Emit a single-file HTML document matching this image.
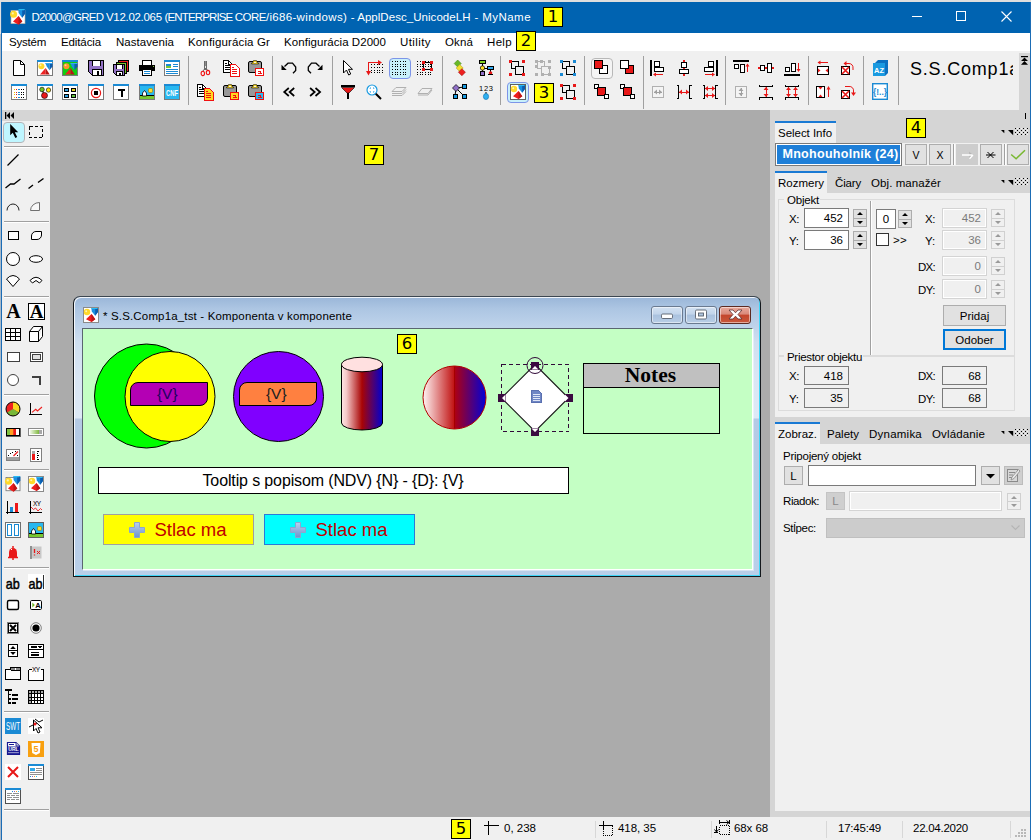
<!DOCTYPE html>
<html lang="sk"><head><meta charset="utf-8"><title>D2000 GRED</title>
<style>
html,body{margin:0;padding:0;}
body{width:1031px;height:840px;position:relative;overflow:hidden;background:#f0f0f0;font-family:"Liberation Sans",Arial,sans-serif;}
.a{position:absolute;box-sizing:border-box;}
.t{position:absolute;white-space:pre;color:#000;}
svg{overflow:visible;}
</style></head>
<body>
<div class="a" style="left:0px;top:0px;width:1031px;height:2px;background:#dedede;"></div>
<div class="a" style="left:0px;top:2px;width:1031px;height:31px;background:#0063b1;"></div>
<div class="a" style="left:0px;top:33px;width:1031px;height:18px;background:#ffffff;"></div>
<div class="a" style="left:0px;top:51px;width:1031px;height:59px;background:#f0f0f0;"></div>
<div class="a" style="left:0px;top:0px;width:1px;height:34px;background:#e2e2e2;"></div>
<div class="a" style="left:0px;top:34px;width:1px;height:806px;background:#a9b9c9;"></div>
<div class="a" style="left:1px;top:2px;width:1px;height:838px;background:#1b6cb5;"></div>
<div class="a" style="left:1030px;top:2px;width:1px;height:838px;background:#1b6cb5;"></div>
<span class="t" style="left:31.50px;top:8.50px;font-size:11.5px;line-height:16px;letter-spacing:-0.680px;color:#fff;">D2000@GRED </span>
<span class="t" style="left:106.00px;top:8.50px;font-size:11.5px;line-height:16px;letter-spacing:-0.311px;color:#fff;">V12.02.065 </span>
<span class="t" style="left:164.60px;top:8.50px;font-size:11.5px;line-height:16px;letter-spacing:-0.868px;color:#fff;">(ENTERPRISE </span>
<span class="t" style="left:234.70px;top:8.50px;font-size:11.5px;line-height:16px;letter-spacing:-0.506px;color:#fff;">CORE</span>
<span class="t" style="left:265.90px;top:8.50px;font-size:11.5px;line-height:16px;letter-spacing:0.327px;color:#fff;">/i686-windows) </span>
<span class="t" style="left:350.70px;top:8.50px;font-size:11.5px;line-height:16px;letter-spacing:0.046px;color:#fff;">- ApplDesc_UnicodeLH </span>
<span class="t" style="left:474.40px;top:8.50px;font-size:11.5px;line-height:16px;letter-spacing:0.446px;color:#fff;">- MyName</span>
<div class="a" style="left:543px;top:7px;width:20px;height:20px;background:#ffff00;border:1px solid #000;"></div>
<span class="t" style="left:547.75px;top:7.00px;font-size:16.5px;line-height:20px;font-family:'DejaVu Sans', sans-serif;">1</span>
<svg class="a" style="left:912px;top:16px;" width="11" height="1" viewBox="0 0 11 1"><rect width="10" height="1" fill="#fff"/></svg>
<svg class="a" style="left:956px;top:11px;" width="11" height="11" viewBox="0 0 11 11"><rect x="0.5" y="0.5" width="9" height="9" fill="none" stroke="#fff"/></svg>
<svg class="a" style="left:1001px;top:11px;" width="11" height="11" viewBox="0 0 11 11"><path d="M0.5 0.5 L10.5 10.5 M10.5 0.5 L0.5 10.5" stroke="#fff" stroke-width="1.1" fill="none"/></svg>
<span class="t" style="left:9.00px;top:34.00px;font-size:11.5px;line-height:16px;letter-spacing:-0.223px;">Systém</span>
<span class="t" style="left:61.00px;top:34.00px;font-size:11.5px;line-height:16px;letter-spacing:-0.114px;">Editácia</span>
<span class="t" style="left:116.00px;top:34.00px;font-size:11.5px;line-height:16px;letter-spacing:0.047px;">Nastavenia</span>
<span class="t" style="left:188.00px;top:34.00px;font-size:11.5px;line-height:16px;letter-spacing:0.140px;">Konfigurácia Gr</span>
<span class="t" style="left:284.00px;top:34.00px;font-size:11.5px;line-height:16px;letter-spacing:0.055px;">Konfigurácia D2000</span>
<span class="t" style="left:400.00px;top:34.00px;font-size:11.5px;line-height:16px;letter-spacing:0.413px;">Utility</span>
<span class="t" style="left:445.00px;top:34.00px;font-size:11.5px;line-height:16px;letter-spacing:0.128px;">Okná</span>
<span class="t" style="left:487.00px;top:34.00px;font-size:11.5px;line-height:16px;letter-spacing:0.337px;">Help</span>
<div class="a" style="left:516px;top:31px;width:20px;height:20px;background:#ffff00;border:1px solid #000;"></div>
<span class="t" style="left:520.75px;top:31.00px;font-size:16.5px;line-height:20px;font-family:'DejaVu Sans', sans-serif;">2</span>
<div class="a" style="left:50px;top:110px;width:720px;height:707px;background:#ababab;"></div>
<div class="a" style="left:2px;top:110px;width:48px;height:707px;background:#f0f0f0;"></div>
<div class="a" style="left:770px;top:110px;width:260px;height:707px;background:#d5d5d5;"></div>
<div class="a" style="left:1019px;top:53px;width:11px;height:57px;background:#d5d5d5;"></div>
<div class="a" style="left:2px;top:817px;width:1028px;height:23px;background:#f0f0f0;"></div>
<div class="a" style="left:364px;top:145px;width:20px;height:20px;background:#ffff00;border:1px solid #000;"></div>
<span class="t" style="left:368.75px;top:145.00px;font-size:16.5px;line-height:20px;font-family:'DejaVu Sans', sans-serif;">7</span>
<div class="a" style="left:188px;top:56px;width:1px;height:49px;background:#a0a0a0;"></div>
<div class="a" style="left:272px;top:56px;width:1px;height:49px;background:#a0a0a0;"></div>
<div class="a" style="left:332px;top:56px;width:1px;height:49px;background:#a0a0a0;"></div>
<div class="a" style="left:442px;top:56px;width:1px;height:49px;background:#a0a0a0;"></div>
<div class="a" style="left:500px;top:56px;width:1px;height:49px;background:#a0a0a0;"></div>
<div class="a" style="left:584px;top:56px;width:1px;height:49px;background:#a0a0a0;"></div>
<div class="a" style="left:643px;top:56px;width:1px;height:53px;background:#a0a0a0;"></div>
<div class="a" style="left:725px;top:56px;width:1px;height:49px;background:#a0a0a0;"></div>
<div class="a" style="left:808px;top:56px;width:1px;height:49px;background:#a0a0a0;"></div>
<div class="a" style="left:863px;top:56px;width:1px;height:49px;background:#a0a0a0;"></div>
<div class="a" style="left:898px;top:56px;width:1px;height:49px;background:#a0a0a0;"></div>
<svg class="a" style="left:11px;top:60px;" width="16" height="16" viewBox="0 0 16 16"><path d="M2.5 0.5 H9.5 L13.5 4.5 V15.5 H2.5 Z" fill="#fff" stroke="#000"/><path d="M9.5 0.5 V4.5 H13.5" fill="none" stroke="#000"/></svg>
<svg class="a" style="left:37px;top:60px;shape-rendering:crispEdges;" width="16" height="16" viewBox="0 0 16 16"><rect x="0.5" y="1.5" width="15" height="14" fill="#fff" stroke="#7a7a7a"/><rect x="0" y="0" width="16" height="2" fill="#1a8ad4"/><g shape-rendering="auto"><circle cx="4.400" cy="6.300" r="3" fill="#ffd92a"/><circle cx="3.500" cy="5.300" r="1" fill="#fff4b0"/><path d="M8.300 3 H12.500 V10.200 L9.800 6.500 Z" fill="#1a90e0"/><path d="M12.500 3 H15.500 V6.500 L12.500 10.200 Z" fill="#0b5cae"/><path d="M8.300 3 H15.500 V4 H8.800Z" fill="#38a8ec"/><path d="M8.600 8 L3 14.600 H8.600 Z" fill="#ee2222"/><path d="M8.600 8 L12.700 14.600 H8.600 Z" fill="#b81414"/></g></svg>
<svg class="a" style="left:62px;top:60px;shape-rendering:crispEdges;" width="16" height="16" viewBox="0 0 16 16"><rect x="0.5" y="1.5" width="15" height="14" fill="#10d010" stroke="#7a7a7a"/><rect x="0" y="0" width="16" height="2" fill="#1a8ad4"/><g shape-rendering="auto"><circle cx="4.400" cy="6.300" r="3" fill="#ff9428"/><circle cx="3.500" cy="5.300" r="1" fill="#ffd0a0"/><path d="M8.300 3 H12.500 V10.200 L9.800 6.500 Z" fill="#1a90e0"/><path d="M12.500 3 H15.500 V6.500 L12.500 10.200 Z" fill="#0b5cae"/><path d="M8.300 3 H15.500 V4 H8.800Z" fill="#38a8ec"/><path d="M8.600 8 L3 14.600 H8.600 Z" fill="#ee2222"/><path d="M8.600 8 L12.700 14.600 H8.600 Z" fill="#b81414"/></g></svg>
<svg class="a" style="left:88px;top:60px;shape-rendering:crispEdges;" width="16" height="16" viewBox="0 0 16 16"><path d="M0.500 0.500 H15.500 V15.500 H4.500 L0.500 11.500 Z" fill="#9272c4" stroke="#000" stroke-width="1"/><rect x="4" y="1" width="8" height="5" fill="#fff"/><path d="M4 1 V6 M12 1 V6" stroke="#000"/><rect x="4.500" y="9.500" width="9" height="6" fill="#fff" stroke="#000"/><rect x="9" y="11" width="2" height="4" fill="#000"/></svg>
<svg class="a" style="left:113px;top:60px;shape-rendering:crispEdges;" width="16" height="16" viewBox="0 0 16 16"><rect x="5.500" y="0.500" width="10" height="11" fill="#ee2020" stroke="#000"/><rect x="3.500" y="2.500" width="10" height="11" fill="#78c030" stroke="#000"/><path d="M0.500 4.500 H11.500 V15.500 H3.500 L0.500 12.500 Z" fill="#9272c4" stroke="#000"/><rect x="3" y="5" width="6" height="4" fill="#fff"/><path d="M3 5 V9 M9 5 V9" stroke="#000"/><rect x="3.500" y="11.500" width="6" height="4" fill="#fff" stroke="#000"/><rect x="6" y="13" width="2" height="2" fill="#000"/></svg>
<svg class="a" style="left:139px;top:60px;shape-rendering:crispEdges;" width="16" height="16" viewBox="0 0 16 16"><rect x="3.500" y="0.500" width="9" height="6" fill="#fff" stroke="#000"/><rect x="0" y="5" width="16" height="6" fill="#000"/><rect x="14" y="6" width="1" height="1" fill="#8c4"/><rect x="3.500" y="9.500" width="9" height="6" fill="#fff" stroke="#000"/><rect x="5" y="11" width="6" height="1" fill="#1a8ad4"/><rect x="5" y="13" width="6" height="1" fill="#1a8ad4"/></svg>
<svg class="a" style="left:164px;top:60px;shape-rendering:crispEdges;" width="16" height="16" viewBox="0 0 16 16"><rect x="0.5" y="1.5" width="15" height="14" fill="#fff" stroke="#7a7a7a"/><rect x="0" y="0" width="16" height="2" fill="#1a8ad4"/><rect x="2" y="4" width="5" height="2" fill="#1a8ad4"/><rect x="2" y="6" width="5" height="2" fill="#78c830"/><rect x="9" y="4" width="5" height="1" fill="#1a8ad4"/><rect x="9" y="6" width="5" height="1" fill="#1a8ad4"/><rect x="2" y="9" width="12" height="1" fill="#1a8ad4"/><rect x="2" y="11" width="12" height="1" fill="#1a8ad4"/><rect x="2" y="13" width="12" height="1" fill="#1a8ad4"/></svg>
<svg class="a" style="left:11px;top:84px;shape-rendering:crispEdges;" width="16" height="16" viewBox="0 0 16 16"><rect x="0.5" y="1.5" width="15" height="14" fill="#fff" stroke="#7a7a7a"/><rect x="0" y="0" width="16" height="2" fill="#1a8ad4"/><rect x="3.0" y="5.0" width="1.2" height="1.2" fill="#f0c000"/><rect x="5.2" y="5.0" width="1.2" height="1.2" fill="#e02020"/><rect x="7.4" y="5.0" width="1.2" height="1.2" fill="#1a8ad4"/><rect x="9.6" y="5.0" width="1.2" height="1.2" fill="#000"/><rect x="11.8" y="5.0" width="1.2" height="1.2" fill="#000"/><rect x="3.0" y="7.5" width="1.2" height="1.2" fill="#f0c000"/><rect x="5.2" y="7.5" width="1.2" height="1.2" fill="#e02020"/><rect x="7.4" y="7.5" width="1.2" height="1.2" fill="#1a8ad4"/><rect x="9.6" y="7.5" width="1.2" height="1.2" fill="#000"/><rect x="11.8" y="7.5" width="1.2" height="1.2" fill="#000"/><rect x="3.0" y="10.0" width="1.2" height="1.2" fill="#f0c000"/><rect x="5.2" y="10.0" width="1.2" height="1.2" fill="#e02020"/><rect x="7.4" y="10.0" width="1.2" height="1.2" fill="#1a8ad4"/><rect x="9.6" y="10.0" width="1.2" height="1.2" fill="#000"/><rect x="11.8" y="10.0" width="1.2" height="1.2" fill="#000"/><rect x="3.0" y="12.5" width="1.2" height="1.2" fill="#f0c000"/><rect x="5.2" y="12.5" width="1.2" height="1.2" fill="#e02020"/><rect x="7.4" y="12.5" width="1.2" height="1.2" fill="#1a8ad4"/><rect x="9.6" y="12.5" width="1.2" height="1.2" fill="#000"/><rect x="11.8" y="12.5" width="1.2" height="1.2" fill="#000"/></svg>
<svg class="a" style="left:37px;top:84px;shape-rendering:crispEdges;" width="16" height="16" viewBox="0 0 16 16"><rect x="0.5" y="1.5" width="15" height="14" fill="#fff" stroke="#7a7a7a"/><rect x="0" y="0" width="16" height="2" fill="#1a8ad4"/><line x1="5" y1="5" x2="7" y2="11" stroke="#000" shape-rendering="auto"/><circle cx="5" cy="5.5" r="2.3" fill="#70c020" stroke="#000" stroke-width=".6" shape-rendering="auto"/><circle cx="11.5" cy="6" r="2.2" fill="#ffe000" stroke="#000" stroke-width=".6" shape-rendering="auto"/><circle cx="7.5" cy="11.5" r="3" fill="#e81818" stroke="#000" stroke-width=".6" shape-rendering="auto"/></svg>
<svg class="a" style="left:62px;top:84px;shape-rendering:crispEdges;" width="16" height="16" viewBox="0 0 16 16"><rect x="0.5" y="1.5" width="15" height="14" fill="#fff" stroke="#7a7a7a"/><rect x="0" y="0" width="16" height="2" fill="#1a8ad4"/><rect x="2.5" y="4.5" width="4" height="3" fill="#30a0e0" stroke="#000"/><rect x="9.5" y="4.5" width="4" height="3" fill="#e0d020" stroke="#000"/><rect x="2.5" y="10.5" width="4" height="3" fill="#30a0e0" stroke="#000"/><rect x="9.5" y="10.5" width="4" height="3" fill="#60c040" stroke="#000"/></svg>
<svg class="a" style="left:88px;top:84px;shape-rendering:crispEdges;" width="16" height="16" viewBox="0 0 16 16"><rect x="0.5" y="1.5" width="15" height="14" fill="#fff" stroke="#7a7a7a"/><rect x="0" y="0" width="16" height="2" fill="#1a8ad4"/><circle cx="8" cy="9" r="4.6" fill="none" stroke="#e81818" stroke-width="1.2" shape-rendering="auto"/><rect x="6" y="7" width="4" height="4" fill="#000"/></svg>
<svg class="a" style="left:113px;top:84px;shape-rendering:crispEdges;" width="16" height="16" viewBox="0 0 16 16"><rect x="0.5" y="1.5" width="15" height="14" fill="#fff" stroke="#7a7a7a"/><rect x="0" y="0" width="16" height="2" fill="#1a8ad4"/><rect x="5" y="5" width="7" height="2" fill="#000"/><rect x="7.500" y="5" width="2" height="8" fill="#000"/></svg>
<svg class="a" style="left:139px;top:84px;shape-rendering:crispEdges;" width="16" height="16" viewBox="0 0 16 16"><rect x="0.5" y="1.5" width="15" height="14" fill="#28b8f0" stroke="#7a7a7a"/><rect x="0" y="0" width="16" height="2" fill="#1a8ad4"/><rect x="1" y="2" width="14" height="13" fill="#28b8f0"/><rect x="1" y="12" width="14" height="3" fill="#78c830"/><rect x="1" y="11" width="14" height="1" fill="#000"/><rect x="9.500" y="4.500" width="4" height="4" rx="1.200" fill="#ffe030" stroke="#a08800" stroke-width=".7" shape-rendering="auto"/><path d="M3.500 12 V9 L5.500 6.500 L7.500 9 V12 Z" fill="#fff" stroke="#000" stroke-width=".8" shape-rendering="auto"/></svg>
<svg class="a" style="left:164px;top:84px;" width="16" height="16" viewBox="0 0 16 16"><rect shape-rendering="crispEdges" x="0.5" y="1.5" width="15" height="14" fill="#28b8f0" stroke="#7a7a7a"/><rect shape-rendering="crispEdges" x="0" y="0" width="16" height="2" fill="#1a8ad4"/><text x="8" y="12" font-family="Liberation Sans, sans-serif" font-weight="bold" font-size="8.500" fill="#fff" text-anchor="middle" textLength="12" lengthAdjust="spacingAndGlyphs">CNF</text></svg>
<svg class="a" style="left:197px;top:60px;shape-rendering:crispEdges;" width="16" height="16" viewBox="0 0 16 16"><rect x="7" y="0.500" width="3" height="9" fill="#6a6a6a"/><rect x="8" y="1" width="1" height="5" fill="#8c8c8c"/><rect x="8" y="6" width="1" height="1.500" fill="#e8e8e8"/><path d="M7.500 9 L6 11 M9.500 9 L11 10.500" stroke="#6a6a6a" shape-rendering="auto"/><ellipse cx="5.800" cy="13.400" rx="1.700" ry="2.200" fill="none" stroke="#f01010" stroke-width="1.100" shape-rendering="auto"/><ellipse cx="11" cy="12.600" rx="1.700" ry="2.200" fill="none" stroke="#f01010" stroke-width="1.100" shape-rendering="auto"/></svg>
<svg class="a" style="left:223px;top:60px;shape-rendering:crispEdges;" width="16" height="16" viewBox="0 0 16 16"><path d="M0.5 0.5 h5 l3.500 3.500 v8 h-8.500 Z" fill="#fff" stroke="#000"/><path d="M5.5 0.5 v3.500 h3.500" fill="none" stroke="#000"/><path d="M2 3.5 h2 M2 5.5 h5 M2 7.5 h5 M2 9.5 h5" stroke="#000" fill="none"/><path d="M7.5 4.5 h5 l3.500 3.500 v8 h-8.500 Z" fill="#fff" stroke="#f01010" stroke-width="1"/><path d="M9 7.5 h2 M9 9.5 h5 M9 11.5 h5 M9 13.5 h5" stroke="#f01010" fill="none"/></svg>
<svg class="a" style="left:248px;top:60px;shape-rendering:crispEdges;" width="16" height="16" viewBox="0 0 16 16"><rect x="0.500" y="1.500" width="13" height="11" rx="1.500" fill="#989898" stroke="#000" shape-rendering="auto"/><path d="M3.500 4 V3 H4.500 L5.500 0.500 H8.500 L9.500 3 H10.500 V4 Z" fill="#f0d020" stroke="#000" stroke-width=".5" shape-rendering="auto"/><rect x="6.300" y="1.500" width="1.400" height="1" fill="#f0f0f0"/><rect x="7.500" y="8.500" width="8" height="7" fill="#fff" stroke="#f01010" stroke-width="1"/><path d="M9.500 11.500 h2.500 v2 h-2.500 M9.500 13.500 h4.500" stroke="#f01010" fill="none"/></svg>
<svg class="a" style="left:197px;top:84px;shape-rendering:crispEdges;" width="16" height="16" viewBox="0 0 16 16"><path d="M0.5 0.5 h5 l3.500 3.500 v8 h-8.500 Z" fill="#fff" stroke="#000"/><path d="M5.5 0.5 v3.500 h3.500" fill="none" stroke="#000"/><path d="M2 3.5 h2 M2 5.5 h5 M2 7.5 h5 M2 9.5 h5" stroke="#000" fill="none"/><path d="M7.5 4.5 h5 l3.500 3.500 v8 h-8.500 Z" fill="#ffd820" stroke="#f01010" stroke-width="1"/><path d="M9 7.5 h2 M9 9.5 h5 M9 11.5 h5 M9 13.5 h5" stroke="#f01010" fill="none"/></svg>
<svg class="a" style="left:223px;top:84px;shape-rendering:crispEdges;" width="16" height="16" viewBox="0 0 16 16"><rect x="0.500" y="1.500" width="13" height="11" rx="1.500" fill="#989898" stroke="#000" shape-rendering="auto"/><path d="M3.500 4 V3 H4.500 L5.500 0.500 H8.500 L9.500 3 H10.500 V4 Z" fill="#f0d020" stroke="#000" stroke-width=".5" shape-rendering="auto"/><rect x="6.300" y="1.500" width="1.400" height="1" fill="#f0f0f0"/><rect x="7.500" y="8.500" width="8" height="7" fill="#ffd820" stroke="#f01010" stroke-width="1"/><path d="M9.500 11.500 h2.500 v2 h-2.500 M9.500 13.500 h4.500" stroke="#f01010" fill="none"/></svg>
<svg class="a" style="left:248px;top:84px;shape-rendering:crispEdges;" width="16" height="16" viewBox="0 0 16 16"><rect x="0.500" y="1.500" width="13" height="11" rx="1.500" fill="#989898" stroke="#000" shape-rendering="auto"/><path d="M3.500 4 V3 H4.500 L5.500 0.500 H8.500 L9.500 3 H10.500 V4 Z" fill="#f0d020" stroke="#000" stroke-width=".5" shape-rendering="auto"/><rect x="6.300" y="1.500" width="1.400" height="1" fill="#f0f0f0"/><rect x="7.500" y="8.500" width="8" height="7" fill="#28b8f0" stroke="#f01010" stroke-width="1"/><path d="M9.500 11.500 h2.500 v2 h-2.500 M9.500 13.500 h4.500" stroke="#f01010" fill="none"/></svg>
<svg class="a" style="left:281px;top:60px;" width="16" height="16" viewBox="0 0 16 16"><path d="M3.500 6.500 L7 3.200 H11.500 L14.700 7 V10.500 L12 13.300" fill="none" stroke="#000" stroke-width="1.300"/><path d="M0.500 4.800 V10 H5.700 Z" fill="#000"/></svg>
<svg class="a" style="left:307px;top:60px;" width="16" height="16" viewBox="0 0 16 16"><path d="M12.500 6.500 L9 3.200 H4.500 L1.300 7 V10.500 L4 13.300" fill="none" stroke="#000" stroke-width="1.300"/><path d="M15.500 4.800 V10 H10.300 Z" fill="#000"/></svg>
<svg class="a" style="left:281px;top:84px;" width="16" height="16" viewBox="0 0 16 16"><path d="M7.800 4 L3.200 8 L7.800 12 M13.200 4 L8.600 8 L13.200 12" fill="none" stroke="#000" stroke-width="1.700"/></svg>
<svg class="a" style="left:307px;top:84px;" width="16" height="16" viewBox="0 0 16 16"><path d="M3.100 4 L7.700 8 L3.100 12 M8.500 4 L13.100 8 L8.500 12" fill="none" stroke="#000" stroke-width="1.700"/></svg>
<svg class="a" style="left:340px;top:60px;" width="16" height="16" viewBox="0 0 16 16"><path d="M3.5 0.5 V13 L6.5 10 L8.7 15 L10.7 14 L8.5 9.3 L12.5 9.3 Z" fill="#fff" stroke="#000" stroke-width="1"/></svg>
<svg class="a" style="left:366px;top:60px;shape-rendering:crispEdges;" width="16" height="16" viewBox="0 0 16 16"><g shape-rendering="crispEdges"><rect x="5" y="4" width="1" height="1" fill="#000"/><rect x="5" y="7" width="1" height="1" fill="#000"/><rect x="5" y="10" width="1" height="1" fill="#000"/><rect x="5" y="12" width="1" height="1" fill="#000"/><rect x="8" y="4" width="1" height="1" fill="#000"/><rect x="8" y="7" width="1" height="1" fill="#000"/><rect x="8" y="10" width="1" height="1" fill="#000"/><rect x="8" y="12" width="1" height="1" fill="#000"/><rect x="11" y="4" width="1" height="1" fill="#000"/><rect x="11" y="7" width="1" height="1" fill="#000"/><rect x="11" y="10" width="1" height="1" fill="#000"/><rect x="11" y="12" width="1" height="1" fill="#000"/><rect x="13" y="4" width="1" height="1" fill="#000"/><rect x="13" y="7" width="1" height="1" fill="#000"/><rect x="13" y="10" width="1" height="1" fill="#000"/><rect x="13" y="12" width="1" height="1" fill="#000"/><rect x="16" y="4" width="1" height="1" fill="#000"/><rect x="16" y="7" width="1" height="1" fill="#000"/><rect x="16" y="10" width="1" height="1" fill="#000"/><rect x="16" y="12" width="1" height="1" fill="#000"/></g><path d="M2.5 14 V2.5 H15" fill="none" stroke="#e81818"/><path d="M12 0 L16 2.5 L12 5 Z M0 11 L2.5 15.5 L5 11 Z" fill="#e81818" shape-rendering="auto"/></svg>
<div class="a" style="left:389px;top:58px;width:22px;height:21px;background:#c8f0fa;border:1px solid #7d94e8;border-radius:4px;"></div>
<svg class="a" style="left:391px;top:60px;shape-rendering:crispEdges;" width="16" height="16" viewBox="0 0 16 16"><g shape-rendering="crispEdges"><rect x="1" y="1" width="1" height="1" fill="#000"/><rect x="1" y="4" width="1" height="1" fill="#000"/><rect x="1" y="6" width="1" height="1" fill="#000"/><rect x="1" y="9" width="1" height="1" fill="#000"/><rect x="1" y="12" width="1" height="1" fill="#000"/><rect x="1" y="14" width="1" height="1" fill="#000"/><rect x="4" y="1" width="1" height="1" fill="#000"/><rect x="4" y="4" width="1" height="1" fill="#000"/><rect x="4" y="6" width="1" height="1" fill="#000"/><rect x="4" y="9" width="1" height="1" fill="#000"/><rect x="4" y="12" width="1" height="1" fill="#000"/><rect x="4" y="14" width="1" height="1" fill="#000"/><rect x="6" y="1" width="1" height="1" fill="#000"/><rect x="6" y="4" width="1" height="1" fill="#000"/><rect x="6" y="6" width="1" height="1" fill="#000"/><rect x="6" y="9" width="1" height="1" fill="#000"/><rect x="6" y="12" width="1" height="1" fill="#000"/><rect x="6" y="14" width="1" height="1" fill="#000"/><rect x="9" y="1" width="1" height="1" fill="#000"/><rect x="9" y="4" width="1" height="1" fill="#000"/><rect x="9" y="6" width="1" height="1" fill="#000"/><rect x="9" y="9" width="1" height="1" fill="#000"/><rect x="9" y="12" width="1" height="1" fill="#000"/><rect x="9" y="14" width="1" height="1" fill="#000"/><rect x="12" y="1" width="1" height="1" fill="#000"/><rect x="12" y="4" width="1" height="1" fill="#000"/><rect x="12" y="6" width="1" height="1" fill="#000"/><rect x="12" y="9" width="1" height="1" fill="#000"/><rect x="12" y="12" width="1" height="1" fill="#000"/><rect x="12" y="14" width="1" height="1" fill="#000"/><rect x="14" y="1" width="1" height="1" fill="#000"/><rect x="14" y="4" width="1" height="1" fill="#000"/><rect x="14" y="6" width="1" height="1" fill="#000"/><rect x="14" y="9" width="1" height="1" fill="#000"/><rect x="14" y="12" width="1" height="1" fill="#000"/><rect x="14" y="14" width="1" height="1" fill="#000"/></g></svg>
<svg class="a" style="left:417px;top:60px;shape-rendering:crispEdges;" width="16" height="16" viewBox="0 0 16 16"><g shape-rendering="crispEdges"><rect x="0" y="1" width="1" height="1" fill="#000"/><rect x="0" y="4" width="1" height="1" fill="#000"/><rect x="0" y="6" width="1" height="1" fill="#000"/><rect x="0" y="9" width="1" height="1" fill="#000"/><rect x="0" y="12" width="1" height="1" fill="#000"/><rect x="0" y="14" width="1" height="1" fill="#000"/><rect x="3" y="1" width="1" height="1" fill="#000"/><rect x="3" y="4" width="1" height="1" fill="#000"/><rect x="3" y="6" width="1" height="1" fill="#000"/><rect x="3" y="9" width="1" height="1" fill="#000"/><rect x="3" y="12" width="1" height="1" fill="#000"/><rect x="3" y="14" width="1" height="1" fill="#000"/><rect x="5" y="1" width="1" height="1" fill="#000"/><rect x="5" y="4" width="1" height="1" fill="#000"/><rect x="5" y="6" width="1" height="1" fill="#000"/><rect x="5" y="9" width="1" height="1" fill="#000"/><rect x="5" y="12" width="1" height="1" fill="#000"/><rect x="5" y="14" width="1" height="1" fill="#000"/><rect x="8" y="1" width="1" height="1" fill="#000"/><rect x="8" y="4" width="1" height="1" fill="#000"/><rect x="8" y="6" width="1" height="1" fill="#000"/><rect x="8" y="9" width="1" height="1" fill="#000"/><rect x="8" y="12" width="1" height="1" fill="#000"/><rect x="8" y="14" width="1" height="1" fill="#000"/><rect x="11" y="1" width="1" height="1" fill="#000"/><rect x="11" y="4" width="1" height="1" fill="#000"/><rect x="11" y="6" width="1" height="1" fill="#000"/><rect x="11" y="9" width="1" height="1" fill="#000"/><rect x="11" y="12" width="1" height="1" fill="#000"/><rect x="11" y="14" width="1" height="1" fill="#000"/><rect x="13" y="1" width="1" height="1" fill="#000"/><rect x="13" y="4" width="1" height="1" fill="#000"/><rect x="13" y="6" width="1" height="1" fill="#000"/><rect x="13" y="9" width="1" height="1" fill="#000"/><rect x="13" y="12" width="1" height="1" fill="#000"/><rect x="13" y="14" width="1" height="1" fill="#000"/></g><rect x="6.5" y="2.500" width="8" height="7" fill="none" stroke="#000"/><rect x="5" y="1" width="3" height="3" fill="#e81818"/><rect x="13" y="1" width="3" height="3" fill="#e81818"/><rect x="5" y="8" width="3" height="3" fill="#e81818"/><rect x="13" y="8" width="3" height="3" fill="#e81818"/></svg>
<svg class="a" style="left:340px;top:84px;" width="16" height="16" viewBox="0 0 16 16"><rect x="1" y="1" width="14" height="2" fill="#000"/><path d="M1.5 3.5 H14.5 L9 9 H7 Z" fill="#e81818" stroke="#000" stroke-width=".6"/><rect x="7" y="9" width="2" height="6" fill="#000"/></svg>
<svg class="a" style="left:366px;top:84px;" width="16" height="16" viewBox="0 0 16 16"><circle cx="6" cy="6" r="5" fill="#fff" stroke="#1a9ae0" stroke-width="1.2"/><path d="M4 4.5 V4 H5 M7 4 H8 V4.5 M8 7.5 V8 H7 M5 8 H4 V7.5" fill="none" stroke="#1a9ae0" stroke-width="1"/><path d="M9.8 9.8 L15 15" stroke="#000" stroke-width="2"/></svg>
<svg class="a" style="left:391px;top:84px;" width="16" height="16" viewBox="0 0 16 16"><path d="M5 3.5 H15 L11 7.5 H1 Z M1 9.5 H11 L15 5.5 M1 11.5 H11 L15 7.5" fill="none" stroke="#b0b0b0" stroke-width="1"/></svg>
<svg class="a" style="left:417px;top:84px;" width="16" height="16" viewBox="0 0 16 16"><path d="M5 4.5 H15 L11 9.5 H1 Z M1 11 H11 L15 6" fill="none" stroke="#b0b0b0" stroke-width="1"/></svg>
<svg class="a" style="left:452px;top:60px;" width="16" height="16" viewBox="0 0 16 16"><g shape-rendering="auto" stroke-width=".6"><path d="M5.700 0 L9.200 3.500 L5.700 7 L2.200 3.500Z" fill="#68b828" stroke="#4a8a18"/><path d="M7.700 4.500 L11.200 8 L7.700 11.500 L4.200 8Z" fill="#f4e030" stroke="#b0a010"/><path d="M9.900 8.700 L13.400 12.200 L9.900 15.700 L6.400 12.200Z" fill="#ee2020" stroke="#a01010"/></g></svg>
<svg class="a" style="left:478px;top:60px;shape-rendering:crispEdges;" width="16" height="16" viewBox="0 0 16 16"><path d="M4.5 4 V12 M4.5 8 H10 M12.5 9 V12" stroke="#000" fill="none"/><rect x="1.5" y="0.5" width="6" height="3" fill="#80d020" stroke="#000"/><circle cx="4.5" cy="8" r="2.2" fill="#ffe020" stroke="#000" stroke-width=".7" shape-rendering="auto"/><rect x="9.5" y="6.500" width="6" height="3" fill="#30a8f0" stroke="#000"/><rect x="2.5" y="11.5" width="4" height="4" fill="#9070c8" stroke="#000"/><circle cx="12.5" cy="13" r="1.8" fill="#e81818" shape-rendering="auto"/><rect x="10" y="14" width="5" height="1" fill="#000"/></svg>
<svg class="a" style="left:452px;top:84px;shape-rendering:crispEdges;" width="16" height="16" viewBox="0 0 16 16"><path d="M4 4 L12 3 M4 4 L3 12 M4 4 L12 12" stroke="#000" fill="none" shape-rendering="auto"/><path d="M4 0.500 L7.5 4 L4 7.5 L0.5 4 Z" fill="#9070c8" stroke="#000" stroke-width=".7" shape-rendering="auto"/><rect x="10.5" y="0.500" width="4" height="4" fill="#1a9ae0" stroke="#000"/><rect x="1.5" y="10.5" width="4" height="4" fill="#1a9ae0" stroke="#000"/><rect x="10.5" y="10.5" width="4" height="4" fill="#1a9ae0" stroke="#000"/></svg>
<svg class="a" style="left:478px;top:84px;" width="16" height="16" viewBox="0 0 16 16"><text x="8" y="6.5" font-family="Liberation Sans, sans-serif" font-size="7.5" fill="#000" text-anchor="middle" textLength="14">123</text><path d="M8 8 V10" stroke="#000"/><ellipse cx="8" cy="12.5" rx="2.6" ry="3" fill="#30b0f0" stroke="#1478b8" stroke-width=".7"/></svg>
<svg class="a" style="left:509px;top:60px;shape-rendering:crispEdges;" width="16" height="16" viewBox="0 0 16 16"><rect x="2.5" y="1.5" width="7" height="7" fill="none" stroke="#000"/><rect x="6.5" y="6.5" width="8" height="8" fill="#f0f0f0" stroke="#000"/><rect x="0" y="0" width="3" height="3" fill="#e81818"/><rect x="13" y="0" width="3" height="3" fill="#e81818"/><rect x="0" y="13" width="3" height="3" fill="#e81818"/><rect x="13" y="13" width="3" height="3" fill="#e81818"/></svg>
<svg class="a" style="left:535px;top:60px;shape-rendering:crispEdges;" width="16" height="16" viewBox="0 0 16 16"><rect x="2.5" y="1.5" width="7" height="7" fill="none" stroke="#b0b0b0"/><rect x="6.5" y="6.5" width="8" height="8" fill="#f0f0f0" stroke="#b0b0b0"/><rect x="0" y="0" width="3" height="3" fill="#b0b0b0"/><rect x="13" y="0" width="3" height="3" fill="#b0b0b0"/><rect x="0" y="13" width="3" height="3" fill="#b0b0b0"/><rect x="13" y="13" width="3" height="3" fill="#b0b0b0"/><rect x="5" y="0" width="3" height="3" fill="#b0b0b0"/><rect x="0" y="5" width="3" height="3" fill="#b0b0b0"/><rect x="13" y="6" width="3" height="3" fill="#b0b0b0"/><rect x="6" y="13" width="3" height="3" fill="#b0b0b0"/></svg>
<svg class="a" style="left:560px;top:60px;shape-rendering:crispEdges;" width="16" height="16" viewBox="0 0 16 16"><rect x="2.5" y="1.5" width="7" height="7" fill="none" stroke="#000"/><rect x="6.5" y="6.5" width="8" height="8" fill="#f0f0f0" stroke="#000"/><rect x="0" y="0" width="3" height="3" fill="#1a8ad4"/><rect x="13" y="0" width="3" height="3" fill="#1a8ad4"/><rect x="0" y="13" width="3" height="3" fill="#1a8ad4"/><rect x="13" y="13" width="3" height="3" fill="#1a8ad4"/></svg>
<div class="a" style="left:507px;top:82px;width:22px;height:21px;background:#c8f0fa;border:1px solid #7d94e8;border-radius:4px;"></div>
<svg class="a" style="left:510px;top:84px;shape-rendering:crispEdges;" width="16" height="16" viewBox="0 0 16 16"><rect x="0.500" y="0.500" width="15" height="15" fill="#fff" stroke="#606060"/><g shape-rendering="auto"><circle cx="4" cy="5" r="3.200" fill="#ffd92a"/><circle cx="3.200" cy="4.200" r="1" fill="#fff4b0"/><path d="M8.300 1 H15 V5 L12.200 8.800 L8.800 4.500 Z" fill="#1a90e0"/><path d="M12.200 1 H15 V5 L12.200 8.800 Z" fill="#0b5cae"/><path d="M8.300 1 H15 L14 2 H9Z" fill="#28bcf6"/><path d="M8.500 7 L3 12.300 L8.500 15 L12.300 12.300 Z" fill="#ee1c1c"/><path d="M8.500 7 L12.300 12.300 L8.500 15 Z" fill="#bc1616"/></g></svg>
<div class="a" style="left:534px;top:83px;width:20px;height:20px;background:#ffff00;border:1px solid #000;"></div>
<span class="t" style="left:538.75px;top:83.00px;font-size:16.5px;line-height:20px;font-family:'DejaVu Sans', sans-serif;">3</span>
<svg class="a" style="left:560px;top:84px;shape-rendering:crispEdges;" width="16" height="16" viewBox="0 0 16 16"><rect x="2.5" y="1.5" width="7" height="7" fill="none" stroke="#000"/><rect x="6.5" y="6.5" width="8" height="8" fill="#f0f0f0" stroke="#000"/><rect x="0" y="0" width="3" height="3" fill="#e81818"/><rect x="13" y="0" width="3" height="3" fill="#e81818"/><rect x="0" y="13" width="3" height="3" fill="#e81818"/><rect x="13" y="13" width="3" height="3" fill="#e81818"/></svg>
<div class="a" style="left:591px;top:58px;width:22px;height:21px;background:#f4f4f4;border:1px solid #b8b8b8;border-radius:4px;"></div>
<svg class="a" style="left:594px;top:60px;shape-rendering:crispEdges;" width="16" height="16" viewBox="0 0 16 16"><rect x="5.5" y="5.5" width="8" height="8" fill="#fff" stroke="#000"/><rect x="0.5" y="0.5" width="8" height="8" fill="#e81818" stroke="#000"/></svg>
<svg class="a" style="left:620px;top:60px;shape-rendering:crispEdges;" width="16" height="16" viewBox="0 0 16 16"><rect x="5.5" y="5.5" width="8" height="8" fill="#e81818" stroke="#000"/><rect x="0.5" y="0.5" width="8" height="8" fill="#fff" stroke="#000"/></svg>
<svg class="a" style="left:594px;top:84px;shape-rendering:crispEdges;" width="16" height="16" viewBox="0 0 16 16"><rect x="0.5" y="0.5" width="4" height="4" fill="#fff" stroke="#000"/><rect x="3.500" y="3.500" width="8" height="8" fill="#e81818" stroke="#000"/><rect x="10.5" y="10.5" width="4" height="4" fill="#fff" stroke="#000"/></svg>
<svg class="a" style="left:620px;top:84px;shape-rendering:crispEdges;" width="16" height="16" viewBox="0 0 16 16"><rect x="0.5" y="0.5" width="4" height="4" fill="#fff" stroke="#000"/><rect x="3.500" y="3.500" width="8" height="8" fill="#e81818" stroke="#000"/><rect x="10.5" y="10.5" width="4" height="4" fill="#fff" stroke="#000"/></svg>
<svg class="a" style="left:650px;top:60px;shape-rendering:crispEdges;" width="16" height="16" viewBox="0 0 16 16"><rect x="0" y="0" width="2" height="16" fill="#000"/><rect x="4.5" y="1.5" width="5" height="5" fill="#fff" stroke="#000"/><rect x="4.5" y="7.5" width="9" height="4" fill="#fff" stroke="#000"/><path d="M4 14.5 H13" stroke="#e81818"/><path d="M6 12.500 L3 14.5 L6 16.5Z" fill="#e81818" shape-rendering="auto"/></svg>
<svg class="a" style="left:676px;top:60px;shape-rendering:crispEdges;" width="16" height="16" viewBox="0 0 16 16"><rect x="7" y="0" width="2" height="16" fill="#e81818"/><rect x="5.5" y="2.5" width="5" height="5" fill="#fff" stroke="#000"/><rect x="3.5" y="9.5" width="9" height="4" fill="#fff" stroke="#000"/></svg>
<svg class="a" style="left:702px;top:60px;shape-rendering:crispEdges;" width="16" height="16" viewBox="0 0 16 16"><rect x="14" y="0" width="2" height="16" fill="#000"/><rect x="6.5" y="1.5" width="5" height="5" fill="#fff" stroke="#000"/><rect x="2.5" y="7.5" width="9" height="4" fill="#fff" stroke="#000"/><path d="M3 14.5 H12" stroke="#e81818"/><path d="M10 12.500 L13 14.5 L10 16.5Z" fill="#e81818" shape-rendering="auto"/></svg>
<svg class="a" style="left:650px;top:84px;shape-rendering:crispEdges;" width="16" height="16" viewBox="0 0 16 16"><rect x="2.5" y="2.5" width="11" height="11" fill="#f4f4f4" stroke="#b0b0b0"/><path d="M4 8 H12" stroke="#a0a0a0"/><path d="M7 5.5 L4 8 L7 10.5Z M9 5.5 L12 8 L9 10.5Z" fill="#a0a0a0" shape-rendering="auto"/></svg>
<svg class="a" style="left:676px;top:84px;shape-rendering:crispEdges;" width="16" height="16" viewBox="0 0 16 16"><path d="M0.5 1.5 H2.5 V14.5 H0.5 M15.5 1.5 H13.5 V14.5 H15.500" fill="none" stroke="#000" stroke-width="1.2"/><path d="M3 8 H13" stroke="#e81818"/><path d="M6 5.5 L3 8 L6 10.5Z M10 5.5 L13 8 L10 10.5Z" fill="#e81818" shape-rendering="auto"/></svg>
<svg class="a" style="left:702px;top:84px;shape-rendering:crispEdges;" width="16" height="16" viewBox="0 0 16 16"><path d="M0.5 1.5 H2.5 V14.5 H0.5 M15.5 1.5 H13.5 V14.5 H15.500" fill="none" stroke="#000" stroke-width="1.2"/><path d="M3 4.5 H13" stroke="#e81818"/><path d="M6 2.0 L3 4.5 L6 7.0Z M10 2.0 L13 4.5 L10 7.0Z" fill="#e81818" shape-rendering="auto"/><path d="M3 11.5 H13" stroke="#e81818"/><path d="M6 9.0 L3 11.5 L6 14.0Z M10 9.0 L13 11.5 L10 14.0Z" fill="#e81818" shape-rendering="auto"/></svg>
<svg class="a" style="left:733px;top:60px;shape-rendering:crispEdges;" width="16" height="16" viewBox="0 0 16 16"><rect x="0" y="0" width="16" height="2" fill="#000"/><rect x="1.5" y="4.5" width="4" height="4" fill="#fff" stroke="#000"/><rect x="7.5" y="4.5" width="4" height="8" fill="#fff" stroke="#000"/><path d="M14.5 4 V12" stroke="#e81818"/><path d="M12.5 6.5 L14.5 3.500 L16.5 6.5Z" fill="#e81818" shape-rendering="auto"/></svg>
<svg class="a" style="left:758px;top:60px;shape-rendering:crispEdges;" width="16" height="16" viewBox="0 0 16 16"><rect x="0" y="7" width="16" height="2" fill="#e81818"/><rect x="2.5" y="5.500" width="4" height="5" fill="#fff" stroke="#000"/><rect x="9.5" y="3.500" width="4" height="9" fill="#fff" stroke="#000"/></svg>
<svg class="a" style="left:784px;top:60px;shape-rendering:crispEdges;" width="16" height="16" viewBox="0 0 16 16"><rect x="0" y="14" width="16" height="2" fill="#000"/><rect x="1.5" y="7.500" width="4" height="4" fill="#fff" stroke="#000"/><rect x="7.5" y="3.500" width="4" height="8" fill="#fff" stroke="#000"/><path d="M14.5 3 V11" stroke="#e81818"/><path d="M12.5 9 L14.5 12 L16.5 9Z" fill="#e81818" shape-rendering="auto"/></svg>
<svg class="a" style="left:733px;top:84px;shape-rendering:crispEdges;" width="16" height="16" viewBox="0 0 16 16"><rect x="2.5" y="2.5" width="11" height="11" fill="#f4f4f4" stroke="#b0b0b0"/><path d="M8 4 V12" stroke="#a0a0a0"/><path d="M5.5 7 L8 4 L10.5 7Z M5.5 9 L8 12 L10.5 9Z" fill="#a0a0a0" shape-rendering="auto"/></svg>
<svg class="a" style="left:758px;top:84px;shape-rendering:crispEdges;" width="16" height="16" viewBox="0 0 16 16"><path d="M1.5 0.5 V2.5 H14.5 V0.5 M1.5 15.5 V13.5 H14.5 V15.500" fill="none" stroke="#000" stroke-width="1.2"/><path d="M8 3 V13" stroke="#e81818"/><path d="M5.5 6 L8 3 L10.5 6Z M5.5 10 L8 13 L10.5 10Z" fill="#e81818" shape-rendering="auto"/></svg>
<svg class="a" style="left:784px;top:84px;shape-rendering:crispEdges;" width="16" height="16" viewBox="0 0 16 16"><path d="M1.5 0.5 V2.5 H14.5 V0.5 M1.5 15.5 V13.5 H14.5 V15.500" fill="none" stroke="#000" stroke-width="1.2"/><path d="M4.5 3 V13" stroke="#e81818"/><path d="M2.0 6 L4.5 3 L7.0 6Z M2.0 10 L4.5 13 L7.0 10Z" fill="#e81818" shape-rendering="auto"/><path d="M11.5 3 V13" stroke="#e81818"/><path d="M9.0 6 L11.5 3 L14.0 6Z M9.0 10 L11.5 13 L14.0 10Z" fill="#e81818" shape-rendering="auto"/></svg>
<svg class="a" style="left:815px;top:60px;shape-rendering:crispEdges;" width="16" height="16" viewBox="0 0 16 16"><path d="M3 2.5 H13" stroke="#e81818"/><path d="M5.5 0.5 L2.5 2.5 L5.5 4.500Z" fill="#e81818" shape-rendering="auto"/><rect x="2.5" y="6.500" width="11" height="8" fill="#fff" stroke="#000"/><path d="M3 8.500 L5.5 10.5 L3 12.500Z M13 8.500 L10.5 10.5 L13 12.500Z" fill="#e81818" shape-rendering="auto"/></svg>
<svg class="a" style="left:840px;top:60px;shape-rendering:crispEdges;" width="16" height="16" viewBox="0 0 16 16"><rect x="1.5" y="6.5" width="8" height="8" fill="#fff" stroke="#000"/><path d="M2 7 L9 14 M9 7 L2 14" stroke="#e81818" stroke-width="1.6" shape-rendering="auto"/><path d="M5 3.5 H9 A4 4 0 0 1 13 8 V10" fill="none" stroke="#e81818" shape-rendering="auto"/><path d="M6.5 1 L3.500 3.5 L6.5 6Z" fill="#e81818" shape-rendering="auto"/></svg>
<svg class="a" style="left:815px;top:84px;shape-rendering:crispEdges;" width="16" height="16" viewBox="0 0 16 16"><rect x="1.5" y="2.5" width="8" height="11" fill="#fff" stroke="#000"/><path d="M3.500 3 L5.500 5.500 L7.500 3Z M3.500 13 L5.500 10.5 L7.500 13Z" fill="#e81818" shape-rendering="auto"/><path d="M13.5 3 V13" stroke="#e81818"/><path d="M11.5 5.500 L13.5 2 L15.5 5.500Z" fill="#e81818" shape-rendering="auto"/></svg>
<svg class="a" style="left:840px;top:84px;shape-rendering:crispEdges;" width="16" height="16" viewBox="0 0 16 16"><rect x="1.5" y="6.5" width="8" height="8" fill="#fff" stroke="#000"/><path d="M2 7 L9 14 M9 7 L2 14" stroke="#e81818" stroke-width="1.6" shape-rendering="auto"/><path d="M5 2.500 H9 A4 4 0 0 1 13.5 7 V10" fill="none" stroke="#e81818" shape-rendering="auto"/><path d="M11 8.5 L13.5 12 L16 8.5Z" fill="#e81818" shape-rendering="auto"/></svg>
<svg class="a" style="left:872px;top:60px;" width="16" height="16" viewBox="0 0 16 16"><path d="M3 3 L6 0 H16 V13 L13 16 H3 Z" fill="#0b70c0"/><rect x="1" y="3" width="12" height="13" fill="#1a9ae0"/><text x="7" y="13" font-family="Liberation Sans, sans-serif" font-weight="bold" font-size="8" fill="#fff" text-anchor="middle" textLength="10" lengthAdjust="spacingAndGlyphs">AZ</text></svg>
<svg class="a" style="left:872px;top:83px;" width="16" height="17" viewBox="0 0 16 17"><rect x="0.700" y="0.700" width="14.600" height="15.600" fill="#fff" stroke="#1a8ad4" stroke-width="1.400"/><text x="8" y="12" font-family="Liberation Sans, sans-serif" font-weight="bold" font-size="9.5" fill="#1a8ad4" text-anchor="middle" textLength="14" lengthAdjust="spacingAndGlyphs">{!..}</text></svg>
<div class="a" style="left:905px;top:55px;width:108px;height:30px;overflow:hidden;"><span style="position:absolute;left:5px;top:1.500px;font-size:18px;letter-spacing:.800px;line-height:24px;white-space:pre;">S.S.Comp1a_tst</span></div>
<svg class="a" style="left:1021px;top:56px;" width="10" height="10" viewBox="0 0 10 10"><rect x="0" y="0" width="7" height="1.200" fill="#000"/><path d="M3.500 1.500 L7 5 H0Z M3.500 5 L7 8.800 H0Z" fill="#000"/></svg>
<svg class="a" style="left:10px;top:9px;" width="16" height="16" viewBox="0 0 16 16"><rect x="1" y="1.500" width="14" height="13.200" fill="#fff" stroke="#b8a898" stroke-width=".6"/><circle cx="3.600" cy="5.300" r="3.500" fill="#ffd92a"/><circle cx="2.800" cy="4.400" r="1.100" fill="#fff4b0"/><path d="M8.300 0.200 H15.200 V4.600 L12.200 8.700 L8.600 4 Z" fill="#1a90e0"/><path d="M12.200 0.200 H15.200 V4.600 L12.200 8.700 Z" fill="#0b5cae"/><path d="M8.300 0 H15.200 L14 1.200 H9.300Z" fill="#28bcf6"/><path d="M8.500 7 L3 12.500 L8.500 15.800 L12.300 12.500 Z" fill="#ee1c1c"/><path d="M8.500 7 L12.300 12.500 L8.500 15.800 Z" fill="#bc1616"/></svg>
<div class="a" style="left:2px;top:110px;width:48px;height:11px;background:#d5d5d5;"></div>
<svg class="a" style="left:5px;top:112px;" width="10" height="8" viewBox="0 0 10 8"><rect x="0" y="0" width="1.3" height="7" fill="#000"/><path d="M5 0 L1.500 3.500 L5 7Z M9 0 L5.500 3.500 L9 7Z" fill="#000"/></svg>
<div class="a" style="left:4px;top:146px;width:45px;height:1px;background:#a0a0a0;"></div>
<div class="a" style="left:4px;top:147px;width:45px;height:1px;background:#ffffff;"></div>
<div class="a" style="left:4px;top:221px;width:45px;height:1px;background:#a0a0a0;"></div>
<div class="a" style="left:4px;top:222px;width:45px;height:1px;background:#ffffff;"></div>
<div class="a" style="left:4px;top:296px;width:45px;height:1px;background:#a0a0a0;"></div>
<div class="a" style="left:4px;top:297px;width:45px;height:1px;background:#ffffff;"></div>
<div class="a" style="left:4px;top:394px;width:45px;height:1px;background:#a0a0a0;"></div>
<div class="a" style="left:4px;top:395px;width:45px;height:1px;background:#ffffff;"></div>
<div class="a" style="left:4px;top:469px;width:45px;height:1px;background:#a0a0a0;"></div>
<div class="a" style="left:4px;top:470px;width:45px;height:1px;background:#ffffff;"></div>
<div class="a" style="left:4px;top:567px;width:45px;height:1px;background:#a0a0a0;"></div>
<div class="a" style="left:4px;top:568px;width:45px;height:1px;background:#ffffff;"></div>
<div class="a" style="left:4px;top:711px;width:45px;height:1px;background:#a0a0a0;"></div>
<div class="a" style="left:4px;top:712px;width:45px;height:1px;background:#ffffff;"></div>
<div class="a" style="left:4px;top:809px;width:45px;height:1px;background:#a0a0a0;"></div>
<div class="a" style="left:4px;top:810px;width:45px;height:1px;background:#ffffff;"></div>
<div class="a" style="left:3px;top:122px;width:22px;height:21px;background:#bff6ff;border:1px solid #b4b4b8;border-radius:4px;"></div>
<svg class="a" style="left:5px;top:124px;" width="16" height="16" viewBox="0 0 16 16"><path d="M5.200 0 V11.200 L7.800 8.800 L10.300 14 L12.200 13 L9.800 8.200 H13.200 Z" fill="#000"/></svg>
<svg class="a" style="left:28px;top:124px;shape-rendering:crispEdges;" width="16" height="16" viewBox="0 0 16 16"><rect x="1.500" y="2.500" width="13" height="11" fill="none" stroke="#000" stroke-width="1.2" stroke-dasharray="3 2"/></svg>
<svg class="a" style="left:5px;top:152px;" width="16" height="16" viewBox="0 0 16 16"><path d="M2.500 13.500 L13.500 2.500" stroke="#000" stroke-width="1.300"/></svg>
<svg class="a" style="left:5px;top:175px;" width="16" height="16" viewBox="0 0 16 16"><path d="M0.500 13 L5.500 9 H9 L15.500 4" stroke="#000" stroke-width="1.300" fill="none"/></svg>
<svg class="a" style="left:28px;top:175px;" width="16" height="16" viewBox="0 0 16 16"><path d="M0.500 13.500 L5 10 M10 7.500 L15.500 3.500" stroke="#000" stroke-width="1.400" fill="none"/></svg>
<svg class="a" style="left:5px;top:199px;" width="16" height="16" viewBox="0 0 16 16"><path d="M2 11.500 A6 6.500 0 0 1 14 11.500" stroke="#222" stroke-width="1" fill="none"/></svg>
<svg class="a" style="left:28px;top:199px;" width="16" height="16" viewBox="0 0 16 16"><path d="M2.500 11.500 H11.500 V3.500 A9 8 0 0 0 2.500 11.500Z" stroke="#707070" stroke-width="1" fill="#f8f8f8"/></svg>
<svg class="a" style="left:5px;top:228px;shape-rendering:crispEdges;" width="16" height="16" viewBox="0 0 16 16"><rect x="3.500" y="3.500" width="10" height="8" fill="#fff" stroke="#000"/></svg>
<svg class="a" style="left:28px;top:228px;" width="16" height="16" viewBox="0 0 16 16"><path d="M3.500 11.500 V8 A4.500 4.500 0 0 1 8 3.500 H13.500 V7 A4.500 4.500 0 0 1 9 11.500 Z" fill="#fff" stroke="#000"/></svg>
<svg class="a" style="left:5px;top:251px;" width="16" height="16" viewBox="0 0 16 16"><circle cx="8" cy="8" r="6.500" fill="#fff" stroke="#000"/></svg>
<svg class="a" style="left:28px;top:251px;" width="16" height="16" viewBox="0 0 16 16"><ellipse cx="8" cy="8" rx="6.500" ry="3.300" fill="#fff" stroke="#000"/></svg>
<svg class="a" style="left:5px;top:273px;" width="16" height="16" viewBox="0 0 16 16"><path d="M1.500 6 Q8 -1 14.500 6 L8 13.500 Z" fill="#fff" stroke="#000"/></svg>
<svg class="a" style="left:28px;top:273px;" width="16" height="16" viewBox="0 0 16 16"><path d="M2 7.500 Q8 1 14 7.500 L11.500 10 L8 7.500 L4.500 10 Z" fill="#fff" stroke="#000"/></svg>
<svg class="a" style="left:5px;top:303px;" width="17" height="17" viewBox="0 0 17 17"><text x="8.500" y="15.300" font-family="Liberation Serif, serif" font-weight="bold" font-size="20" text-anchor="middle" fill="#000">A</text></svg>
<svg class="a" style="left:28px;top:303px;" width="17" height="17" viewBox="0 0 17 17"><rect x="0.500" y="0.500" width="16" height="16" fill="#fff" stroke="#000"/><text x="8.500" y="15" font-family="Liberation Serif, serif" font-weight="bold" font-size="19" text-anchor="middle" fill="#000">A</text></svg>
<svg class="a" style="left:5px;top:326px;shape-rendering:crispEdges;" width="16" height="16" viewBox="0 0 16 16"><rect x="0.500" y="2.500" width="15" height="12" fill="#fff" stroke="#000"/><path d="M0 6.500 H16 M0 10.500 H16 M5.500 2 V15 M10.500 2 V15" stroke="#000"/></svg>
<svg class="a" style="left:28px;top:326px;" width="16" height="16" viewBox="0 0 16 16"><path d="M1.500 5.500 H10.500 V15.500 H1.500 Z M1.500 5.500 L5.500 0.500 H14.500 L10.500 5.500 M14.500 0.500 V10.500 L10.500 15.500" fill="#fff" stroke="#000"/></svg>
<svg class="a" style="left:5px;top:349px;shape-rendering:crispEdges;" width="16" height="16" viewBox="0 0 16 16"><rect x="2.500" y="3.500" width="12" height="9" fill="#fff" stroke="#404040"/></svg>
<svg class="a" style="left:28px;top:349px;shape-rendering:crispEdges;" width="16" height="16" viewBox="0 0 16 16"><rect x="2.500" y="3.500" width="12" height="9" fill="#fff" stroke="#404040"/><rect x="4.500" y="5.500" width="8" height="5" fill="#e0e0e0" stroke="#404040"/></svg>
<svg class="a" style="left:5px;top:372px;" width="16" height="16" viewBox="0 0 16 16"><circle cx="8" cy="8" r="5.500" fill="#fff" stroke="#404040"/></svg>
<svg class="a" style="left:28px;top:372px;shape-rendering:crispEdges;" width="16" height="16" viewBox="0 0 16 16"><path d="M4 4.500 H11.500 V13" fill="none" stroke="#404040" stroke-width="2"/></svg>
<svg class="a" style="left:5px;top:400.5px;" width="16" height="16" viewBox="0 0 16 16"><circle cx="8" cy="8" r="7" fill="#ee2020"/><path d="M8 8 L8.00 1.00 A7 7 0 0 1 14.06 11.50 Z" fill="#f8d820"/><path d="M8 8 L14.06 11.50 A7 7 0 0 1 1.94 11.50 Z" fill="#78b838"/><circle cx="8" cy="8" r="7" fill="none" stroke="#000" stroke-width="1"/></svg>
<svg class="a" style="left:28px;top:400px;" width="16" height="16" viewBox="0 0 16 16"><path d="M2.500 3 V15 M1 14.500 H14" fill="none" stroke="#000" shape-rendering="crispEdges"/><path d="M4 12.400 L7.700 9.300 L9.500 11 L14 7" fill="none" stroke="#ee2020" stroke-width="1.100"/></svg>
<svg class="a" style="left:5px;top:427px;" width="17" height="10" viewBox="0 0 17 10"><g shape-rendering="crispEdges"><rect x="1" y="1" width="14" height="8" fill="#fff"/><rect x="2" y="2" width="3" height="6" fill="#80c040"/><rect x="5" y="2" width="3" height="6" fill="#ffa020"/><rect x="8" y="2" width="1" height="6" fill="#f04020"/><rect x="9" y="2" width="2" height="6" fill="#ee1818"/><rect x="1.500" y="1.500" width="13" height="7" fill="none" stroke="#000"/><rect x="1" y="1" width="14" height="8" fill="none" stroke="#000" stroke-width=".6"/></g></svg>
<svg class="a" style="left:28px;top:427px;" width="18" height="10" viewBox="0 0 18 10"><defs><linearGradient id="gbar2" x1="0" x2="1" y1="0" y2="0"><stop offset="0" stop-color="#f0f8e8"/><stop offset="1" stop-color="#80b840"/></linearGradient></defs><rect x="0.500" y="1.500" width="15" height="7" fill="#fff" stroke="#8a8a8a" shape-rendering="crispEdges"/><rect x="2" y="3" width="9" height="4" fill="url(#gbar2)"/><rect x="11" y="3" width="3" height="4" fill="#a8a8a8"/></svg>
<svg class="a" style="left:5px;top:447px;shape-rendering:crispEdges;" width="16" height="16" viewBox="0 0 16 16"><rect x="1.500" y="2.500" width="13" height="11" fill="#fff" stroke="#808080"/><rect x="2" y="10" width="12" height="3" fill="#a0a0a0"/><path d="M8.500 9 L13 4.500" stroke="#ee2020" stroke-width="1.200" shape-rendering="auto"/><path d="M3 8.500 H4 M4.500 6.500 H5.500 M6.500 5 H7.500 M9.500 4.500 H10.500 M12 8.500 H13" stroke="#000"/></svg>
<svg class="a" style="left:28px;top:447px;shape-rendering:crispEdges;" width="16" height="16" viewBox="0 0 16 16"><rect x="2.500" y="1.500" width="11" height="13" fill="#fff" stroke="#808080"/><rect x="4" y="7" width="3" height="6" fill="#ee1818"/><rect x="4" y="3.500" width="3" height="3.500" fill="#a8a8a8"/><path d="M9 4.500 H11 M9 6.500 H10 M9 8.500 H11 M9 10.500 H10 M9 12.500 H11" stroke="#000"/></svg>
<svg class="a" style="left:5px;top:476px;" width="16" height="16" viewBox="0 0 16 16"><rect x="1" y="1.500" width="14" height="13.200" fill="#fff" stroke="#808080" stroke-width=".9"/><circle cx="3.600" cy="5.300" r="3.500" fill="#ffd92a"/><circle cx="2.800" cy="4.400" r="1.100" fill="#fff4b0"/><path d="M8.300 0.200 H15.200 V4.600 L12.200 8.700 L8.600 4 Z" fill="#1a90e0"/><path d="M12.200 0.200 H15.200 V4.600 L12.200 8.700 Z" fill="#0b5cae"/><path d="M8.300 0 H15.200 L14 1.200 H9.300Z" fill="#28bcf6"/><path d="M8.500 7 L3 12.500 L8.500 15.800 L12.300 12.500 Z" fill="#ee1c1c"/><path d="M8.500 7 L12.300 12.500 L8.500 15.800 Z" fill="#bc1616"/></svg>
<svg class="a" style="left:28px;top:476px;shape-rendering:crispEdges;" width="16" height="16" viewBox="0 0 16 16"><rect x="0.500" y="0.500" width="15" height="15" fill="#fff" stroke="#8a8a8a"/><g shape-rendering="auto"><circle cx="4" cy="5" r="3.200" fill="#ffd92a"/><circle cx="3.200" cy="4.200" r="1" fill="#fff4b0"/><path d="M8.300 1 H15 V5 L12.200 8.800 L8.800 4.500 Z" fill="#1a90e0"/><path d="M12.200 1 H15 V5 L12.200 8.800 Z" fill="#0b5cae"/><path d="M8.300 1 H15 L14 2 H9Z" fill="#28bcf6"/><path d="M8.500 7 L3 12.300 L8.500 15 L12.300 12.300 Z" fill="#ee1c1c"/><path d="M8.500 7 L12.300 12.300 L8.500 15 Z" fill="#bc1616"/></g></svg>
<svg class="a" style="left:5px;top:499px;shape-rendering:crispEdges;" width="16" height="16" viewBox="0 0 16 16"><path d="M2.500 2 V15 M1 13.500 H14" fill="none" stroke="#000"/><rect x="5" y="8" width="3" height="5" fill="#1a8ad4"/><rect x="10" y="4" width="3" height="9" fill="#ee1818"/></svg>
<svg class="a" style="left:28px;top:499px;" width="16" height="16" viewBox="0 0 16 16"><path d="M2.500 2 V15 M1 13.500 H14" fill="none" stroke="#000" shape-rendering="crispEdges"/><path d="M3 8 L5.500 10.500 L7.500 9 L10 12 L12.500 9.500 L14 11" fill="none" stroke="#ee1818" stroke-width=".9"/><text x="9" y="7" font-family="Liberation Sans, sans-serif" font-size="6.500" text-anchor="middle" fill="#000" textLength="8">XY</text></svg>
<svg class="a" style="left:5px;top:522px;shape-rendering:crispEdges;" width="16" height="16" viewBox="0 0 16 16"><rect x="0.500" y="0.500" width="15" height="15" fill="#fff" stroke="#707070"/><rect x="2.500" y="2.500" width="4" height="11" fill="#fff" stroke="#1a8ad4" stroke-width="1"/><rect x="9.500" y="2.500" width="4" height="11" fill="#fff" stroke="#1a8ad4" stroke-width="1"/></svg>
<svg class="a" style="left:28px;top:522px;shape-rendering:crispEdges;" width="16" height="16" viewBox="0 0 16 16"><rect x="0.500" y="0.500" width="15" height="15" fill="#28b8f0" stroke="#606060"/><rect x="1" y="12" width="14" height="3" fill="#78c830"/><rect x="1" y="11" width="14" height="1" fill="#000"/><rect x="9.500" y="4.500" width="4" height="4" rx="1.200" fill="#ffe030" stroke="#a08800" stroke-width=".7" shape-rendering="auto"/><path d="M3.500 12 V9 L5.500 6.500 L7.500 9 V12 Z" fill="#fff" stroke="#000" stroke-width=".8" shape-rendering="auto"/></svg>
<svg class="a" style="left:5px;top:545px;" width="16" height="16" viewBox="0 0 16 16"><path d="M8 1 V3 M3 12.500 H13 M8 13 V15" stroke="#e81818" stroke-width="1.500"/><path d="M4 12 V7.500 A4 4.500 0 0 1 12 7.500 V12 Z" fill="#e81818"/><path d="M6 5 L7 4" stroke="#fff"/></svg>
<svg class="a" style="left:28px;top:545px;" width="16" height="16" viewBox="0 0 16 16"><rect x="2.500" y="1.500" width="11" height="12" fill="#c8c8c8"/><rect x="2" y="1" width="2" height="13" fill="#909090"/><path d="M6.500 4 V8 M6.500 9.500 V10.500" stroke="#e81818" stroke-width="1.300"/><path d="M9 6 L12 9 M12 6 L9 9" stroke="#e81818"/></svg>
<svg class="a" style="left:4px;top:574px;" width="20" height="18" viewBox="0 0 20 18"><text x="1.800" y="14.800" font-family="Liberation Sans, sans-serif" font-size="15" fill="#000" stroke="#000" stroke-width=".500" textLength="14" lengthAdjust="spacingAndGlyphs">ab</text></svg>
<svg class="a" style="left:27px;top:574px;" width="20" height="18" viewBox="0 0 20 18"><rect x="1" y="0" width="17" height="16" fill="#fff"/><text x="1.500" y="14.800" font-family="Liberation Sans, sans-serif" font-size="15" fill="#000" stroke="#000" stroke-width=".500" textLength="14" lengthAdjust="spacingAndGlyphs">ab</text><path d="M16.500 1 V15" stroke="#303030" shape-rendering="crispEdges"/></svg>
<svg class="a" style="left:5px;top:597px;" width="16" height="16" viewBox="0 0 16 16"><rect x="2.500" y="3.500" width="11" height="9" rx="1.500" fill="#fff" stroke="#000" stroke-width="1.400"/></svg>
<svg class="a" style="left:28px;top:597px;" width="16" height="16" viewBox="0 0 16 16"><rect x="2.500" y="3.500" width="11" height="9" rx="1.200" fill="#fff" stroke="#000"/><path d="M4.300 5.500 L6.800 8 L4.300 10.500Z" fill="#70b828"/><text x="10" y="10.800" font-family="Liberation Sans, sans-serif" font-weight="bold" font-size="7.500" text-anchor="middle" fill="#000">A</text></svg>
<svg class="a" style="left:5px;top:620px;" width="16" height="16" viewBox="0 0 16 16"><rect x="2.500" y="2.500" width="11" height="11" fill="#fff" stroke="#808080"/><rect x="3.500" y="3.500" width="9" height="9" fill="#fff" stroke="#000"/><path d="M5 5 L11 11 M11 5 L5 11" stroke="#000" stroke-width="2"/></svg>
<svg class="a" style="left:28px;top:620px;" width="16" height="16" viewBox="0 0 16 16"><circle cx="8" cy="8" r="5.300" fill="#fff" stroke="#707070" stroke-width=".9"/><circle cx="8" cy="8" r="3.600" fill="#000"/></svg>
<svg class="a" style="left:5px;top:643px;" width="16" height="16" viewBox="0 0 16 16"><rect x="3.500" y="1.500" width="9" height="12" fill="#fff" stroke="#000" stroke-width="1.200" shape-rendering="crispEdges"/><path d="M3.500 7.500 H12.500" stroke="#000" shape-rendering="crispEdges"/><path d="M8 3 L10.800 6 H5.200Z M8 12 L10.800 9 H5.200Z" fill="#000"/></svg>
<svg class="a" style="left:28px;top:643px;shape-rendering:crispEdges;" width="16" height="16" viewBox="0 0 16 16"><rect x="0.500" y="1.500" width="15" height="13" fill="#fff" stroke="#000"/><path d="M0.500 6.500 H15.500" stroke="#000"/><path d="M3 4 H9 M3 9.500 H11 M3 12 H11" stroke="#000" stroke-width="1.200"/><path d="M10.500 3 L12 5 L13.500 3" stroke="#000" fill="none"/></svg>
<svg class="a" style="left:5px;top:666px;shape-rendering:crispEdges;" width="16" height="16" viewBox="0 0 16 16"><path d="M0.500 3.500 H5.500 V1.500 H15.500 V13.500 H0.500 Z" fill="#fff" stroke="#000" stroke-width="1.200"/><rect x="6" y="2" width="4" height="2.500" fill="#888"/><rect x="11" y="2" width="4" height="2.500" fill="#888"/><path d="M5.500 4.500 H15.500" stroke="#000"/></svg>
<svg class="a" style="left:28px;top:666px;" width="16" height="16" viewBox="0 0 16 16"><path d="M0.500 3.500 V14.500 H15.500 V3.500 H12.500 M0.500 3.500 H3.500" fill="#fff" stroke="#000" shape-rendering="crispEdges"/><text x="8" y="6.200" font-family="Liberation Sans, sans-serif" font-size="6.500" text-anchor="middle" fill="#000" textLength="8">XY</text></svg>
<svg class="a" style="left:5px;top:689px;shape-rendering:crispEdges;" width="16" height="16" viewBox="0 0 16 16"><path d="M0 1 H7 M3.500 1 V14.500 M3.500 5.500 H6 M3.500 10 H6 M3.500 14 H6" stroke="#000" stroke-width="1.500" fill="none"/><path d="M7 5.500 H13 M7 10 H13 M7 14 H11" stroke="#000" stroke-width="2"/></svg>
<svg class="a" style="left:28px;top:689px;shape-rendering:crispEdges;" width="16" height="16" viewBox="0 0 16 16"><rect x="0" y="1" width="16" height="14" fill="#000"/><rect x="1" y="2.0" width="2" height="2.300" fill="#a8a8a8"/><rect x="1" y="5.3" width="2" height="2.300" fill="#a8a8a8"/><rect x="1" y="8.6" width="2" height="2.300" fill="#a8a8a8"/><rect x="1" y="11.9" width="2" height="2.300" fill="#a8a8a8"/><rect x="4" y="2.0" width="2" height="2.300" fill="#a8a8a8"/><rect x="4" y="5.3" width="2" height="2.300" fill="#fff"/><rect x="4" y="8.6" width="2" height="2.300" fill="#fff"/><rect x="4" y="11.9" width="2" height="2.300" fill="#fff"/><rect x="7" y="2.0" width="2" height="2.300" fill="#a8a8a8"/><rect x="7" y="5.3" width="2" height="2.300" fill="#fff"/><rect x="7" y="8.6" width="2" height="2.300" fill="#fff"/><rect x="7" y="11.9" width="2" height="2.300" fill="#fff"/><rect x="10" y="2.0" width="2" height="2.300" fill="#a8a8a8"/><rect x="10" y="5.3" width="2" height="2.300" fill="#fff"/><rect x="10" y="8.6" width="2" height="2.300" fill="#fff"/><rect x="10" y="11.9" width="2" height="2.300" fill="#fff"/><rect x="13" y="2.0" width="2" height="2.300" fill="#a8a8a8"/><rect x="13" y="5.3" width="2" height="2.300" fill="#fff"/><rect x="13" y="8.6" width="2" height="2.300" fill="#fff"/><rect x="13" y="11.9" width="2" height="2.300" fill="#fff"/></svg>
<svg class="a" style="left:5px;top:718px;" width="16" height="16" viewBox="0 0 16 16"><rect width="16" height="16" fill="#1a8ad4"/><text x="8" y="12" font-family="Liberation Sans, sans-serif" font-size="10" fill="#fff" text-anchor="middle" textLength="14" lengthAdjust="spacingAndGlyphs">SWT</text></svg>
<svg class="a" style="left:28px;top:718px;" width="16" height="16" viewBox="0 0 16 16"><rect width="16" height="16" fill="#fff"/><path d="M5.500 2 V13 L8 10.500 L10 15 L12 14 L10 9.800 H14 Z" fill="#fff" stroke="#000"/><path d="M1 9 L9 5 M7 1 L11 4 L15 2" stroke="#000" fill="none"/><circle cx="7" cy="6" r="1.500" fill="#e81818"/></svg>
<svg class="a" style="left:5px;top:741px;" width="16" height="16" viewBox="0 0 16 16"><path d="M2.500 1.500 H11 L14.500 5 V13.500 H2.500 Z" fill="#fff" stroke="#181890" stroke-width="1.200"/><path d="M11 1.500 V5 H14.500" fill="#c8c8d8" stroke="#181890" stroke-width=".8"/><rect x="2" y="5.500" width="13" height="5.500" fill="#181890"/><text x="8.500" y="10.300" font-family="Liberation Sans, sans-serif" font-weight="bold" font-size="5.800" fill="#fff" text-anchor="middle" textLength="10.500" lengthAdjust="spacingAndGlyphs">URL</text><path d="M4 3.500 H9" stroke="#181890"/><path d="M3 12.200 H14" stroke="#181890" stroke-width="1.400"/></svg>
<svg class="a" style="left:28px;top:741px;" width="16" height="16" viewBox="0 0 16 16"><rect width="16" height="16" fill="#f8a010"/><path d="M3.500 2 H12.500 L11.800 12 L8 14 L4.200 12 Z" fill="#fff"/><text x="8" y="11" font-family="Liberation Sans, sans-serif" font-weight="bold" font-size="9" fill="#f8a010" text-anchor="middle">5</text></svg>
<svg class="a" style="left:5px;top:764px;" width="16" height="16" viewBox="0 0 16 16"><rect width="16" height="16" fill="#fff"/><path d="M3 3 L13 13 M13 3 L3 13" stroke="#e81818" stroke-width="2"/></svg>
<svg class="a" style="left:28px;top:764px;shape-rendering:crispEdges;" width="16" height="16" viewBox="0 0 16 16"><rect x="0.500" y="1.500" width="15" height="14" fill="#fff" stroke="#505050"/><rect x="0" y="0" width="16" height="2" fill="#1a8ad4"/><rect x="2" y="4" width="5" height="3" fill="#30a8e8"/><path d="M8 4.500 H14 M8 6.500 H14 M2 8.500 H14 M2 10.500 H14" stroke="#909090"/><rect x="2" y="12" width="1" height="1" fill="#1a8ad4"/><rect x="4" y="12" width="1" height="1" fill="#9060c0"/><rect x="6" y="12" width="1" height="1" fill="#f0a020"/><rect x="8" y="12" width="1" height="1" fill="#20c0f0"/></svg>
<svg class="a" style="left:5px;top:788px;shape-rendering:crispEdges;" width="16" height="16" viewBox="0 0 16 16"><rect x="0.500" y="1.500" width="15" height="14" fill="#fff" stroke="#505050"/><rect x="0" y="0" width="16" height="2" fill="#1a8ad4"/><rect x="7" y="3" width="1" height="1" fill="#1a8ad4"/><rect x="9" y="3" width="1" height="1" fill="#9060c0"/><rect x="11" y="3" width="1" height="1" fill="#f0a020"/><rect x="13" y="3" width="1" height="1" fill="#20c0f0"/><path d="M2 5.500 H7 M8 5.500 H14 M2 7.500 H5 M6 7.500 H10 M11 7.500 H14 M2 9.500 H7 M8 9.500 H14 M2 11.500 H5 M6 11.500 H10 M11 11.500 H14" stroke="#909090"/></svg>
<div class="a" style="left:73px;top:296px;width:688px;height:281px;border:1px solid #14181c;border-top-color:#3c4650;border-radius:7px 7px 0 0;background:linear-gradient(180deg,#9ab6d8 0px,#adc6e3 12px,#bdd2ea 28px,#cfdff0 45px,#d9e6f4 80px,#dde9f6 121px,#b4cae5 122px,#b9cfe9 281px);box-shadow:inset 1px 1px 0 rgba(255,255,255,.85), inset -1px -1px 0 #3fd6f8;"></div>
<div class="a" style="left:82px;top:328px;width:671px;height:242px;background:#c4ffc4;border-left:1px solid #5a6670;border-top:1px solid #5a6670;border-right:1px solid #fff;border-bottom:1px solid #fff;box-shadow:1px 1px 0 rgba(255,255,255,.45);"></div>
<svg class="a" style="left:83px;top:307px;shape-rendering:crispEdges;" width="16" height="16" viewBox="0 0 16 16"><rect x="0.500" y="0.500" width="15" height="15" fill="#fff" stroke="#8a8a8a"/><g shape-rendering="auto"><circle cx="4" cy="5" r="3.200" fill="#ffd92a"/><circle cx="3.200" cy="4.200" r="1" fill="#fff4b0"/><path d="M8.300 1 H15 V5 L12.200 8.800 L8.800 4.500 Z" fill="#1a90e0"/><path d="M12.200 1 H15 V5 L12.200 8.800 Z" fill="#0b5cae"/><path d="M8.300 1 H15 L14 2 H9Z" fill="#28bcf6"/><path d="M8.500 7 L3 12.300 L8.500 15 L12.300 12.300 Z" fill="#ee1c1c"/><path d="M8.500 7 L12.300 12.300 L8.500 15 Z" fill="#bc1616"/></g></svg>
<span class="t" style="left:103.00px;top:307.50px;font-size:11.5px;line-height:16px;letter-spacing:0.160px;">* S.S.Comp1a_tst - Komponenta v komponente</span>
<div class="a" style="left:651px;top:306px;width:32px;height:18px;border:1px solid #6a7a90;border-radius:3px;background:linear-gradient(180deg,#d4e2f2 0%,#c1d4ea 45%,#a9c1de 50%,#b9cee6 100%);box-shadow:inset 0 0 0 1px rgba(255,255,255,.5);"></div>
<div class="a" style="left:685px;top:306px;width:32px;height:18px;border:1px solid #6a7a90;border-radius:3px;background:linear-gradient(180deg,#d4e2f2 0%,#c1d4ea 45%,#a9c1de 50%,#b9cee6 100%);box-shadow:inset 0 0 0 1px rgba(255,255,255,.5);"></div>
<div class="a" style="left:719px;top:306px;width:32px;height:18px;border:1px solid #5c2a22;border-radius:3px;background:linear-gradient(180deg,#e9a99c 0%,#d9897a 45%,#c4452c 50%,#c8583c 100%);box-shadow:inset 0 0 0 1px rgba(255,255,255,.5);"></div>
<svg class="a" style="left:661px;top:313px;" width="12" height="6" viewBox="0 0 12 6"><rect x="0.500" y="1" width="11" height="4.500" rx="1.200" fill="#fff" stroke="#58606c" stroke-width=".9"/></svg>
<svg class="a" style="left:695px;top:309px;" width="12" height="11" viewBox="0 0 12 11"><rect x="0.500" y="1" width="11" height="9" rx="1.200" fill="#fff" stroke="#58606c" stroke-width=".9"/><rect x="3.500" y="4" width="5" height="3" fill="#b0c6e0" stroke="#58606c" stroke-width=".9"/></svg>
<svg class="a" style="left:728px;top:309px;" width="16" height="11" viewBox="0 0 16 11"><path d="M1 1 H5 L7.500 3.800 L10 1 H14 L10 5.500 L14 10 H10 L7.500 7.200 L5 10 H1 L5 5.500 Z" fill="#fff" stroke="#5a3030" stroke-width=".8"/></svg>
<div class="a" style="left:397px;top:334px;width:20px;height:20px;background:#ffff00;border:1px solid #000;"></div>
<span class="t" style="left:401.75px;top:334.00px;font-size:16.5px;line-height:20px;font-family:'DejaVu Sans', sans-serif;">6</span>
<svg class="a" style="left:0;top:0" width="1031" height="840" viewBox="0 0 1031 840">
<defs>
<linearGradient id="gcyl" x1="0" x2="1" y1="0" y2="0"><stop offset="0" stop-color="#ffe6e6"/><stop offset=".12" stop-color="#f4c8c8"/><stop offset=".5" stop-color="#a80404"/><stop offset="1" stop-color="#0000d0"/></linearGradient>
<linearGradient id="gball" x1="0" x2="1" y1="0" y2="0"><stop offset="0" stop-color="#fff4f4"/><stop offset=".5" stop-color="#c01010"/><stop offset=".5" stop-color="#b00010"/><stop offset="1" stop-color="#0000d8"/></linearGradient>
</defs>
<circle cx="146.500" cy="396" r="52" fill="#00ff00" stroke="#000" stroke-width="1"/>
<circle cx="170" cy="396.500" r="45" fill="#ffff00" stroke="#000" stroke-width="1"/>
<path d="M130.500 405.500 V390 a7.500 7.500 0 0 1 7.500 -7.500 H207.500 V398 a7.500 7.500 0 0 1 -7.500 7.500 Z" fill="#b400b4" stroke="#000" stroke-width="1"/>
<text x="167.300" y="398.800" font-family="Liberation Sans, sans-serif" font-size="15.500" text-anchor="middle" fill="#200060">{V}</text>
<circle cx="278.500" cy="396.500" r="45" fill="#8000ff" stroke="#000" stroke-width="1"/>
<path d="M239.500 405.500 V390 a7.500 7.500 0 0 1 7.500 -7.500 H316.500 V398 a7.500 7.500 0 0 1 -7.500 7.500 Z" fill="#ff8040" stroke="#000" stroke-width="1"/>
<text x="276.300" y="398.800" font-family="Liberation Sans, sans-serif" font-size="15.500" text-anchor="middle" fill="#202020">{V}</text>
<path d="M341.500 364.500 V423 a20.500 7 0 0 0 41 0 V364.500 Z" fill="url(#gcyl)" stroke="#000" stroke-width="1"/>
<ellipse cx="362" cy="364.500" rx="20.500" ry="7.300" fill="#ffe0e0" stroke="#000" stroke-width="1"/>
<circle cx="454.500" cy="397.500" r="31.500" fill="url(#gball)" stroke="#b00000" stroke-width="1"/><path d="M454.500 366.500 V428.500" stroke="#a40000" stroke-width="1"/>
<path d="M535 364.500 L568.500 398 L535 431.500 L501.500 398 Z" fill="#fff" stroke="#181818" stroke-width="1.100"/>
<rect x="501.500" y="364.500" width="67" height="67" fill="none" stroke="#300838" stroke-width="1" stroke-dasharray="4 3" shape-rendering="crispEdges"/>
<g fill="#3a0a40" shape-rendering="crispEdges"><rect x="531" y="362" width="8" height="8"/><rect x="531" y="428" width="8" height="8"/><rect x="498" y="394" width="8" height="8"/><rect x="565" y="394" width="8" height="8"/></g>
<circle cx="535" cy="365.500" r="8" fill="none" stroke="#300838" stroke-width="1"/>
<path d="M531.500 369.500 L535 366 L538.500 369.500 M531.500 428.500 L535 432 L538.500 428.500 M505.500 394.500 L502 398 L505.500 401.500 M565 394.500 L568.500 398 L565 401.500" fill="#fff" stroke="none"/>
<g shape-rendering="crispEdges"><path d="M531.500 390.500 h7 l3 3 v8.500 h-10 Z" fill="#6f86c4" stroke="#5a70b0"/><path d="M533 394.500 h7 M533 396.500 h7 M533 398.500 h7 M533 400.500 h7" stroke="#dfe6f6"/></g>
<rect x="583.500" y="363.500" width="136" height="70" fill="none" stroke="#000" shape-rendering="crispEdges"/>
<rect x="584" y="364" width="135" height="23" fill="#c0c0c0" shape-rendering="crispEdges"/>
<path d="M583 387.500 H720" stroke="#000" shape-rendering="crispEdges"/>
<text x="650.500" y="382" font-family="Liberation Serif, serif" font-weight="bold" font-size="21.500" text-anchor="middle" fill="#000">Notes</text>
</svg>
<div class="a" style="left:98px;top:467px;width:471px;height:27px;background:#fff;border:1px solid #000;"></div>
<span class="t" style="left:202.50px;top:470.50px;font-size:16px;line-height:20px;letter-spacing:-0.129px;">Tooltip s popisom (NDV) {N} - {D}: {V}</span>
<div class="a" style="left:103px;top:514px;width:151px;height:31px;background:#ffff00;border:1px solid #a0a0a0;"></div>
<div class="a" style="left:264px;top:514px;width:151px;height:31px;background:#00ffff;border:1px solid #2a7ad8;"></div>
<svg class="a" style="left:129px;top:522px;" width="16" height="16" viewBox="0 0 16 16"><defs><linearGradient id="gpl" x1="0" x2="0" y1="0" y2="1"><stop offset="0" stop-color="#b8d0f0"/><stop offset="1" stop-color="#6f94cc"/></linearGradient></defs><path d="M5.500 0.500 H10.500 V5.500 H15.500 V10.500 H10.500 V15.500 H5.500 V10.500 H0.500 V5.500 H5.500 Z" fill="url(#gpl)" stroke="#8aa6d0" stroke-width="1" stroke-linejoin="round"/></svg>
<svg class="a" style="left:290px;top:522px;" width="16" height="16" viewBox="0 0 16 16"><defs><linearGradient id="gpl2" x1="0" x2="0" y1="0" y2="1"><stop offset="0" stop-color="#b8d0f0"/><stop offset="1" stop-color="#6f94cc"/></linearGradient></defs><path d="M5.500 0.500 H10.500 V5.500 H15.500 V10.500 H10.500 V15.500 H5.500 V10.500 H0.500 V5.500 H5.500 Z" fill="url(#gpl2)" stroke="#8aa6d0" stroke-width="1" stroke-linejoin="round"/></svg>
<span class="t" style="left:154.50px;top:518.50px;font-size:18.5px;line-height:22px;letter-spacing:0.004px;color:#c00000;">Stlac ma</span>
<span class="t" style="left:315.50px;top:518.50px;font-size:18.5px;line-height:22px;letter-spacing:0.004px;color:#c00000;">Stlac ma</span>
<div class="a" style="left:1025px;top:113px;width:1px;height:6px;background:#000;"></div>
<div class="a" style="left:775px;top:121px;width:61px;height:2px;background:#1a7ad4;"></div>
<div class="a" style="left:775px;top:123px;width:61px;height:20px;background:#f0f0f0;"></div>
<span class="t" style="left:778.00px;top:124.50px;font-size:11.5px;line-height:16px;letter-spacing:-0.031px;">Select Info</span>
<svg class="a" style="left:1001px;top:128px;" width="28" height="8" viewBox="0 0 28 8"><path d="M0 2 H3.300 V5.300 Z" fill="#000"/><path d="M7 2 H12.200 V7.200 Z" fill="#000"/><g shape-rendering="crispEdges"><rect x="14" y="0" width="1" height="1" fill="#000"/><rect x="16" y="0" width="1" height="1" fill="#f4f4f4"/><rect x="18" y="0" width="1" height="1" fill="#000"/><rect x="20" y="0" width="1" height="1" fill="#f4f4f4"/><rect x="22" y="0" width="1" height="1" fill="#000"/><rect x="24" y="0" width="1" height="1" fill="#f4f4f4"/><rect x="26" y="0" width="1" height="1" fill="#000"/><rect x="16" y="2" width="1" height="1" fill="#000"/><rect x="14" y="2" width="1" height="1" fill="#f4f4f4"/><rect x="20" y="2" width="1" height="1" fill="#000"/><rect x="18" y="2" width="1" height="1" fill="#f4f4f4"/><rect x="24" y="2" width="1" height="1" fill="#000"/><rect x="22" y="2" width="1" height="1" fill="#f4f4f4"/><rect x="26" y="2" width="1" height="1" fill="#f4f4f4"/><rect x="14" y="4" width="1" height="1" fill="#000"/><rect x="16" y="4" width="1" height="1" fill="#f4f4f4"/><rect x="18" y="4" width="1" height="1" fill="#000"/><rect x="20" y="4" width="1" height="1" fill="#f4f4f4"/><rect x="22" y="4" width="1" height="1" fill="#000"/><rect x="24" y="4" width="1" height="1" fill="#f4f4f4"/><rect x="26" y="4" width="1" height="1" fill="#000"/><rect x="16" y="6" width="1" height="1" fill="#000"/><rect x="14" y="6" width="1" height="1" fill="#f4f4f4"/><rect x="20" y="6" width="1" height="1" fill="#000"/><rect x="18" y="6" width="1" height="1" fill="#f4f4f4"/><rect x="24" y="6" width="1" height="1" fill="#000"/><rect x="22" y="6" width="1" height="1" fill="#f4f4f4"/><rect x="26" y="6" width="1" height="1" fill="#f4f4f4"/></g></svg>
<div class="a" style="left:775px;top:143px;width:255px;height:23px;background:#f0f0f0;"></div>
<div class="a" style="left:906px;top:118px;width:20px;height:20px;background:#ffff00;border:1px solid #000;"></div>
<span class="t" style="left:910.75px;top:118.00px;font-size:16.5px;line-height:20px;font-family:'DejaVu Sans', sans-serif;">4</span>
<div class="a" style="left:775px;top:143px;width:127px;height:23px;background:#fff;border:1px solid #7a7a7a;"></div>
<div class="a" style="left:777px;top:145px;width:123px;height:19px;background:#1e7fd8;"></div>
<span class="t" style="left:782.50px;top:146.00px;font-size:12.5px;line-height:16px;letter-spacing:0.288px;color:#fff;font-weight:bold;">Mnohouholník (24)</span>
<div class="a" style="left:905px;top:144px;width:22px;height:21px;background:#e1e1e1;border:1px solid #adadad;"></div>
<span class="t" style="left:912.50px;top:147.00px;font-size:10.5px;line-height:16px;">V</span>
<div class="a" style="left:929px;top:144px;width:22px;height:21px;background:#e1e1e1;border:1px solid #adadad;"></div>
<span class="t" style="left:936.50px;top:147.00px;font-size:10.5px;line-height:16px;">X</span>
<div class="a" style="left:953px;top:144px;width:1px;height:21px;background:#a0a0a0;"></div>
<div class="a" style="left:954px;top:144px;width:1px;height:21px;background:#fff;"></div>
<div class="a" style="left:956px;top:144px;width:22px;height:21px;background:#cdcdcd;"></div>
<svg class="a" style="left:961px;top:150px;" width="14" height="10" viewBox="0 0 14 10"><path d="M8 1.500 L12 5 L8.500 8.500 Z" fill="#b4b4b4"/><path d="M1 5 H11.500 M12 5 L8.500 8.800" stroke="#fff" stroke-width="1.300" fill="none"/></svg>
<div class="a" style="left:980px;top:144px;width:22px;height:21px;background:#e1e1e1;border:1px solid #adadad;"></div>
<svg class="a" style="left:985px;top:150px;" width="12" height="10" viewBox="0 0 12 10"><path d="M1 5 H10.500 M2.500 2 L8.500 8 M8.500 2 L2.500 8" stroke="#000" stroke-width="1" fill="none"/></svg>
<div class="a" style="left:1004px;top:144px;width:1px;height:21px;background:#a0a0a0;"></div>
<div class="a" style="left:1005px;top:144px;width:1px;height:21px;background:#fff;"></div>
<div class="a" style="left:1007px;top:144px;width:22px;height:21px;background:#e1e1e1;border:1px solid #adadad;"></div>
<svg class="a" style="left:1009px;top:148px;" width="18" height="12" viewBox="0 0 18 12"><path d="M2.200 6.500 L7.100 10.800 L16 2.200" stroke="#78b830" stroke-width="1.500" fill="none"/></svg>
<div class="a" style="left:775px;top:171px;width:52px;height:2px;background:#1a7ad4;"></div>
<div class="a" style="left:775px;top:173px;width:52px;height:20px;background:#f0f0f0;"></div>
<span class="t" style="left:778.00px;top:174.50px;font-size:11.5px;line-height:16px;letter-spacing:-0.001px;">Rozmery</span>
<span class="t" style="left:835.00px;top:174.50px;font-size:11.5px;line-height:16px;letter-spacing:-0.167px;">Čiary</span>
<span class="t" style="left:871.00px;top:174.50px;font-size:11.5px;line-height:16px;letter-spacing:0.081px;">Obj. manažér</span>
<svg class="a" style="left:1001px;top:178px;" width="28" height="8" viewBox="0 0 28 8"><path d="M0 2 H3.300 V5.300 Z" fill="#000"/><path d="M7 2 H12.200 V7.200 Z" fill="#000"/><g shape-rendering="crispEdges"><rect x="14" y="0" width="1" height="1" fill="#000"/><rect x="16" y="0" width="1" height="1" fill="#f4f4f4"/><rect x="18" y="0" width="1" height="1" fill="#000"/><rect x="20" y="0" width="1" height="1" fill="#f4f4f4"/><rect x="22" y="0" width="1" height="1" fill="#000"/><rect x="24" y="0" width="1" height="1" fill="#f4f4f4"/><rect x="26" y="0" width="1" height="1" fill="#000"/><rect x="16" y="2" width="1" height="1" fill="#000"/><rect x="14" y="2" width="1" height="1" fill="#f4f4f4"/><rect x="20" y="2" width="1" height="1" fill="#000"/><rect x="18" y="2" width="1" height="1" fill="#f4f4f4"/><rect x="24" y="2" width="1" height="1" fill="#000"/><rect x="22" y="2" width="1" height="1" fill="#f4f4f4"/><rect x="26" y="2" width="1" height="1" fill="#f4f4f4"/><rect x="14" y="4" width="1" height="1" fill="#000"/><rect x="16" y="4" width="1" height="1" fill="#f4f4f4"/><rect x="18" y="4" width="1" height="1" fill="#000"/><rect x="20" y="4" width="1" height="1" fill="#f4f4f4"/><rect x="22" y="4" width="1" height="1" fill="#000"/><rect x="24" y="4" width="1" height="1" fill="#f4f4f4"/><rect x="26" y="4" width="1" height="1" fill="#000"/><rect x="16" y="6" width="1" height="1" fill="#000"/><rect x="14" y="6" width="1" height="1" fill="#f4f4f4"/><rect x="20" y="6" width="1" height="1" fill="#000"/><rect x="18" y="6" width="1" height="1" fill="#f4f4f4"/><rect x="24" y="6" width="1" height="1" fill="#000"/><rect x="22" y="6" width="1" height="1" fill="#f4f4f4"/><rect x="26" y="6" width="1" height="1" fill="#f4f4f4"/></g></svg>
<div class="a" style="left:775px;top:193px;width:255px;height:224px;background:#f0f0f0;"></div>
<div class="a" style="left:778px;top:199px;width:237px;height:157px;border:1px solid #dcdcdc;"></div>
<div class="a" style="left:784px;top:193px;width:36px;height:12px;background:#f0f0f0;"></div>
<span class="t" style="left:787.00px;top:192.00px;font-size:11.5px;line-height:16px;letter-spacing:-0.206px;">Objekt</span>
<div class="a" style="left:778px;top:356px;width:237px;height:55px;border:1px solid #dcdcdc;"></div>
<div class="a" style="left:784px;top:350px;width:79px;height:12px;background:#f0f0f0;"></div>
<span class="t" style="left:787.00px;top:349.00px;font-size:11.5px;line-height:16px;letter-spacing:-0.306px;">Priestor objektu</span>
<div class="a" style="left:870px;top:201px;width:1px;height:154px;background:#a0a0a0;"></div>
<div class="a" style="left:871px;top:201px;width:1px;height:154px;background:#fff;"></div>
<span class="t" style="left:789.00px;top:210.50px;font-size:11.5px;line-height:16px;letter-spacing:-0.433px;">X:</span>
<div class="a" style="left:804px;top:208px;width:45px;height:20px;background:#fff;border:1px solid #7a7a7a;"></div>
<span class="t" style="left:823.81px;top:210.00px;font-size:11.5px;line-height:16px;color:#000;">452</span>
<div class="a" style="left:853px;top:209px;width:14px;height:10px;background:#e1e1e1;border:1px solid #adadad;"></div>
<div class="a" style="left:853px;top:218px;width:14px;height:9px;background:#e1e1e1;border:1px solid #adadad;"></div>
<svg class="a" style="left:857px;top:212px;" width="6" height="12" viewBox="0 0 6 12"><path d="M0 3 L3 0 L6 3Z M0 9 L3 12 L6 9Z" fill="#000"/></svg>
<span class="t" style="left:789.00px;top:232.50px;font-size:11.5px;line-height:16px;letter-spacing:-0.365px;">Y:</span>
<div class="a" style="left:804px;top:230px;width:45px;height:20px;background:#fff;border:1px solid #7a7a7a;"></div>
<span class="t" style="left:830.21px;top:232.00px;font-size:11.5px;line-height:16px;color:#000;">36</span>
<div class="a" style="left:853px;top:231px;width:14px;height:10px;background:#e1e1e1;border:1px solid #adadad;"></div>
<div class="a" style="left:853px;top:240px;width:14px;height:9px;background:#e1e1e1;border:1px solid #adadad;"></div>
<svg class="a" style="left:857px;top:234px;" width="6" height="12" viewBox="0 0 6 12"><path d="M0 3 L3 0 L6 3Z M0 9 L3 12 L6 9Z" fill="#000"/></svg>
<div class="a" style="left:876px;top:209px;width:20px;height:20px;background:#fff;border:1px solid #7a7a7a;"></div>
<span class="t" style="left:882.80px;top:211.00px;font-size:11.5px;line-height:16px;">0</span>
<div class="a" style="left:898px;top:210px;width:14px;height:10px;background:#e1e1e1;border:1px solid #adadad;"></div>
<div class="a" style="left:898px;top:219px;width:14px;height:9px;background:#e1e1e1;border:1px solid #adadad;"></div>
<svg class="a" style="left:902px;top:213px;" width="6" height="12" viewBox="0 0 6 12"><path d="M0 3 L3 0 L6 3Z M0 9 L3 12 L6 9Z" fill="#000"/></svg>
<div class="a" style="left:876px;top:233px;width:13px;height:13px;background:#fff;border:1px solid #333;"></div>
<span class="t" style="left:893.00px;top:231.50px;font-size:11.5px;line-height:16px;letter-spacing:0.284px;">&gt;&gt;</span>
<span class="t" style="left:925.00px;top:210.50px;font-size:11.5px;line-height:16px;letter-spacing:-0.433px;">X:</span>
<div class="a" style="left:942px;top:208px;width:45px;height:20px;background:#f0f0f0;border:1px solid #d4d4d4;box-shadow:inset 0 0 0 1px #fff;"></div>
<span class="t" style="left:961.81px;top:210.00px;font-size:11.5px;line-height:16px;color:#7a7a7a;">452</span>
<div class="a" style="left:991px;top:209px;width:14px;height:10px;background:#f0f0f0;border:1px solid #d0d0d0;"></div>
<div class="a" style="left:991px;top:218px;width:14px;height:9px;background:#f0f0f0;border:1px solid #d0d0d0;"></div>
<svg class="a" style="left:995px;top:212px;" width="6" height="12" viewBox="0 0 6 12"><path d="M0 3 L3 0 L6 3Z M0 9 L3 12 L6 9Z" fill="#9a9a9a"/></svg>
<span class="t" style="left:925.00px;top:232.50px;font-size:11.5px;line-height:16px;letter-spacing:-0.115px;">Y:</span>
<div class="a" style="left:942px;top:230px;width:45px;height:20px;background:#f0f0f0;border:1px solid #d4d4d4;box-shadow:inset 0 0 0 1px #fff;"></div>
<span class="t" style="left:968.21px;top:232.00px;font-size:11.5px;line-height:16px;color:#7a7a7a;">36</span>
<div class="a" style="left:991px;top:231px;width:14px;height:10px;background:#f0f0f0;border:1px solid #d0d0d0;"></div>
<div class="a" style="left:991px;top:240px;width:14px;height:9px;background:#f0f0f0;border:1px solid #d0d0d0;"></div>
<svg class="a" style="left:995px;top:234px;" width="6" height="12" viewBox="0 0 6 12"><path d="M0 3 L3 0 L6 3Z M0 9 L3 12 L6 9Z" fill="#9a9a9a"/></svg>
<span class="t" style="left:918.00px;top:258.50px;font-size:11.5px;line-height:16px;letter-spacing:-0.723px;">DX:</span>
<div class="a" style="left:942px;top:256px;width:45px;height:20px;background:#f0f0f0;border:1px solid #d4d4d4;box-shadow:inset 0 0 0 1px #fff;"></div>
<span class="t" style="left:974.60px;top:258.00px;font-size:11.5px;line-height:16px;color:#7a7a7a;">0</span>
<div class="a" style="left:991px;top:257px;width:14px;height:10px;background:#f0f0f0;border:1px solid #d0d0d0;"></div>
<div class="a" style="left:991px;top:266px;width:14px;height:9px;background:#f0f0f0;border:1px solid #d0d0d0;"></div>
<svg class="a" style="left:995px;top:260px;" width="6" height="12" viewBox="0 0 6 12"><path d="M0 3 L3 0 L6 3Z M0 9 L3 12 L6 9Z" fill="#9a9a9a"/></svg>
<span class="t" style="left:918.00px;top:281.50px;font-size:11.5px;line-height:16px;letter-spacing:-0.512px;">DY:</span>
<div class="a" style="left:942px;top:279px;width:45px;height:20px;background:#f0f0f0;border:1px solid #d4d4d4;box-shadow:inset 0 0 0 1px #fff;"></div>
<span class="t" style="left:974.60px;top:281.00px;font-size:11.5px;line-height:16px;color:#7a7a7a;">0</span>
<div class="a" style="left:991px;top:280px;width:14px;height:10px;background:#f0f0f0;border:1px solid #d0d0d0;"></div>
<div class="a" style="left:991px;top:289px;width:14px;height:9px;background:#f0f0f0;border:1px solid #d0d0d0;"></div>
<svg class="a" style="left:995px;top:283px;" width="6" height="12" viewBox="0 0 6 12"><path d="M0 3 L3 0 L6 3Z M0 9 L3 12 L6 9Z" fill="#9a9a9a"/></svg>
<div class="a" style="left:943px;top:305px;width:63px;height:21px;background:#e1e1e1;border:1px solid #adadad;"></div>
<span class="t" style="left:959.80px;top:307.50px;font-size:11.5px;line-height:16px;">Pridaj</span>
<div class="a" style="left:943px;top:329px;width:63px;height:21px;background:#e1e1e1;border:2px solid #0078d7;"></div>
<span class="t" style="left:955.32px;top:331.50px;font-size:11.5px;line-height:16px;">Odober</span>
<span class="t" style="left:789.00px;top:368.00px;font-size:11.5px;line-height:16px;letter-spacing:-0.433px;">X:</span>
<div class="a" style="left:804px;top:366px;width:45px;height:19px;background:#f0f0f0;border:1px solid #7a7a7a;"></div>
<span class="t" style="left:823.81px;top:367.50px;font-size:11.5px;line-height:16px;color:#000;">418</span>
<span class="t" style="left:789.00px;top:391.00px;font-size:11.5px;line-height:16px;letter-spacing:-0.365px;">Y:</span>
<div class="a" style="left:804px;top:388px;width:45px;height:20px;background:#f0f0f0;border:1px solid #7a7a7a;"></div>
<span class="t" style="left:830.21px;top:390.00px;font-size:11.5px;line-height:16px;color:#000;">35</span>
<span class="t" style="left:918.00px;top:368.00px;font-size:11.5px;line-height:16px;letter-spacing:-0.723px;">DX:</span>
<div class="a" style="left:942px;top:366px;width:45px;height:19px;background:#f0f0f0;border:1px solid #7a7a7a;"></div>
<span class="t" style="left:968.21px;top:367.50px;font-size:11.5px;line-height:16px;color:#000;">68</span>
<span class="t" style="left:918.00px;top:391.00px;font-size:11.5px;line-height:16px;letter-spacing:-0.512px;">DY:</span>
<div class="a" style="left:942px;top:388px;width:45px;height:20px;background:#f0f0f0;border:1px solid #7a7a7a;"></div>
<span class="t" style="left:968.21px;top:390.00px;font-size:11.5px;line-height:16px;color:#000;">68</span>
<div class="a" style="left:775px;top:422px;width:45px;height:2px;background:#1a7ad4;"></div>
<div class="a" style="left:775px;top:424px;width:45px;height:20px;background:#f0f0f0;"></div>
<span class="t" style="left:778.00px;top:425.50px;font-size:11.5px;line-height:16px;letter-spacing:0.002px;">Zobraz.</span>
<span class="t" style="left:827.00px;top:425.50px;font-size:11.5px;line-height:16px;letter-spacing:0.006px;">Palety</span>
<span class="t" style="left:869.00px;top:425.50px;font-size:11.5px;line-height:16px;letter-spacing:0.234px;">Dynamika</span>
<span class="t" style="left:932.00px;top:425.50px;font-size:11.5px;line-height:16px;letter-spacing:0.135px;">Ovládanie</span>
<svg class="a" style="left:1001px;top:429px;" width="28" height="8" viewBox="0 0 28 8"><path d="M0 2 H3.300 V5.300 Z" fill="#000"/><path d="M7 2 H12.200 V7.200 Z" fill="#000"/><g shape-rendering="crispEdges"><rect x="14" y="0" width="1" height="1" fill="#000"/><rect x="16" y="0" width="1" height="1" fill="#f4f4f4"/><rect x="18" y="0" width="1" height="1" fill="#000"/><rect x="20" y="0" width="1" height="1" fill="#f4f4f4"/><rect x="22" y="0" width="1" height="1" fill="#000"/><rect x="24" y="0" width="1" height="1" fill="#f4f4f4"/><rect x="26" y="0" width="1" height="1" fill="#000"/><rect x="16" y="2" width="1" height="1" fill="#000"/><rect x="14" y="2" width="1" height="1" fill="#f4f4f4"/><rect x="20" y="2" width="1" height="1" fill="#000"/><rect x="18" y="2" width="1" height="1" fill="#f4f4f4"/><rect x="24" y="2" width="1" height="1" fill="#000"/><rect x="22" y="2" width="1" height="1" fill="#f4f4f4"/><rect x="26" y="2" width="1" height="1" fill="#f4f4f4"/><rect x="14" y="4" width="1" height="1" fill="#000"/><rect x="16" y="4" width="1" height="1" fill="#f4f4f4"/><rect x="18" y="4" width="1" height="1" fill="#000"/><rect x="20" y="4" width="1" height="1" fill="#f4f4f4"/><rect x="22" y="4" width="1" height="1" fill="#000"/><rect x="24" y="4" width="1" height="1" fill="#f4f4f4"/><rect x="26" y="4" width="1" height="1" fill="#000"/><rect x="16" y="6" width="1" height="1" fill="#000"/><rect x="14" y="6" width="1" height="1" fill="#f4f4f4"/><rect x="20" y="6" width="1" height="1" fill="#000"/><rect x="18" y="6" width="1" height="1" fill="#f4f4f4"/><rect x="24" y="6" width="1" height="1" fill="#000"/><rect x="22" y="6" width="1" height="1" fill="#f4f4f4"/><rect x="26" y="6" width="1" height="1" fill="#f4f4f4"/></g></svg>
<div class="a" style="left:775px;top:444px;width:255px;height:367px;background:#f0f0f0;"></div>
<span class="t" style="left:783.00px;top:448.00px;font-size:11.5px;line-height:16px;letter-spacing:-0.239px;">Pripojený objekt</span>
<div class="a" style="left:784px;top:466px;width:19px;height:19px;background:#e1e1e1;border:1px solid #adadad;"></div>
<span class="t" style="left:790.30px;top:468.00px;font-size:11.5px;line-height:16px;">L</span>
<div class="a" style="left:808px;top:465px;width:168px;height:21px;background:#fff;border:1px solid #7a7a7a;"></div>
<div class="a" style="left:981px;top:466px;width:19px;height:19px;background:#e1e1e1;border:1px solid #adadad;"></div>
<svg class="a" style="left:986px;top:474px;" width="9" height="5" viewBox="0 0 9 5"><path d="M0 0 H9 L4.500 4.500Z" fill="#000"/></svg>
<div class="a" style="left:1004px;top:466px;width:19px;height:19px;background:#cfcfcf;border:1px solid #bcbcbc;"></div>
<svg class="a" style="left:1006px;top:468px;" width="15" height="15" viewBox="0 0 15 15"><rect x="1.500" y="1.500" width="10" height="12" fill="#d8d8d8" stroke="#8a8a8a"/><path d="M3 4.500 H9 M3 7 H7 M3 9.500 H6" stroke="#8a8a8a"/><path d="M5 12 L6 9 L12.500 1.500 L14 3 L8 10.500 Z" fill="#e8e8e8" stroke="#8a8a8a" stroke-width=".8"/></svg>
<span class="t" style="left:783.00px;top:493.00px;font-size:11.5px;line-height:16px;letter-spacing:-0.427px;">Riadok:</span>
<div class="a" style="left:826px;top:492px;width:19px;height:18px;background:#cfcfcf;border:1px solid #c4c4c4;"></div>
<span class="t" style="left:832.30px;top:493.00px;font-size:11.5px;line-height:16px;color:#8a8a8a;">L</span>
<div class="a" style="left:849px;top:491px;width:153px;height:20px;background:#f0f0f0;border:1px solid #d4d4d4;box-shadow:inset 0 0 0 1px #fff;"></div>
<div class="a" style="left:1007px;top:493px;width:14px;height:9px;background:#f0f0f0;border:1px solid #d0d0d0;"></div>
<div class="a" style="left:1007px;top:501px;width:14px;height:9px;background:#f0f0f0;border:1px solid #d0d0d0;"></div>
<svg class="a" style="left:1011px;top:496px;" width="6" height="11" viewBox="0 0 6 11"><path d="M0 3 L3 0 L6 3Z M0 8 L3 11 L6 8Z" fill="#9a9a9a"/></svg>
<span class="t" style="left:783.00px;top:520.00px;font-size:11.5px;line-height:16px;letter-spacing:-0.308px;">Stĺpec:</span>
<div class="a" style="left:826px;top:518px;width:199px;height:20px;background:#cccccc;border:1px solid #bfbfbf;"></div>
<svg class="a" style="left:1011px;top:525px;" width="9" height="6" viewBox="0 0 9 6"><path d="M0.500 0.500 L4.500 4.500 L8.500 0.500" stroke="#b4b4b4" stroke-width="1.100" fill="none"/></svg>
<div class="a" style="left:595px;top:821px;width:1px;height:17px;background:#d7d7d7;"></div>
<div class="a" style="left:711px;top:821px;width:1px;height:17px;background:#d7d7d7;"></div>
<div class="a" style="left:826px;top:821px;width:1px;height:17px;background:#d7d7d7;"></div>
<div class="a" style="left:902px;top:821px;width:1px;height:17px;background:#d7d7d7;"></div>
<div class="a" style="left:1010px;top:821px;width:1px;height:17px;background:#d7d7d7;"></div>
<div class="a" style="left:451px;top:819px;width:20px;height:20px;background:#ffff00;border:1px solid #000;"></div>
<span class="t" style="left:455.75px;top:819.00px;font-size:16.5px;line-height:20px;font-family:'DejaVu Sans', sans-serif;">5</span>
<svg class="a" style="left:484px;top:821px;" width="15" height="15" viewBox="0 0 15 15"><path d="M0 4.500 H15 M4.500 0 V14" stroke="#000" fill="none" shape-rendering="crispEdges"/></svg>
<span class="t" style="left:504.00px;top:819.50px;font-size:11.5px;line-height:16px;letter-spacing:0.004px;">0, 238</span>
<svg class="a" style="left:599px;top:821px;" width="15" height="16" viewBox="0 0 15 16"><path d="M0 4.500 H14 M4.500 0 V8" stroke="#000" fill="none" shape-rendering="crispEdges"/><path d="M4.500 8 V14.500 H13.500 V5" fill="none" stroke="#000" stroke-dasharray="1 1" shape-rendering="crispEdges"/></svg>
<span class="t" style="left:618.00px;top:819.50px;font-size:11.5px;line-height:16px;letter-spacing:-0.053px;">418, 35</span>
<svg class="a" style="left:714px;top:820px;" width="18" height="16" viewBox="0 0 18 16"><rect x="5.500" y="5.500" width="10" height="9" fill="none" stroke="#000" stroke-dasharray="1 1" shape-rendering="crispEdges"/><path d="M5.500 0 V4 M15.500 0 V4 M6 2.500 H15 M12.500 0.500 L15 2.500 L12.500 4.500 M0 12.500 H4 M2.500 6 V12 M0.500 9.500 L2.500 12 L4.500 9.500" stroke="#000" fill="none" stroke-width="1"/></svg>
<span class="t" style="left:734.00px;top:819.50px;font-size:11.5px;line-height:16px;letter-spacing:-0.088px;">68x 68</span>
<span class="t" style="left:838.00px;top:819.50px;font-size:11.5px;line-height:16px;letter-spacing:-0.221px;">17:45:49</span>
<span class="t" style="left:913.00px;top:819.50px;font-size:11.5px;line-height:16px;letter-spacing:-0.256px;">22.04.2020</span>
<svg class="a" style="left:1015px;top:826px;" width="12" height="12" viewBox="0 0 12 12"><rect x="6" y="3" width="2" height="2" fill="#b8b8b8"/><rect x="9" y="3" width="2" height="2" fill="#b8b8b8"/><rect x="3" y="6" width="2" height="2" fill="#b8b8b8"/><rect x="6" y="6" width="2" height="2" fill="#b8b8b8"/><rect x="9" y="6" width="2" height="2" fill="#b8b8b8"/><rect x="0" y="9" width="2" height="2" fill="#b8b8b8"/><rect x="3" y="9" width="2" height="2" fill="#b8b8b8"/><rect x="6" y="9" width="2" height="2" fill="#b8b8b8"/><rect x="9" y="9" width="2" height="2" fill="#b8b8b8"/></svg>
</body></html>
